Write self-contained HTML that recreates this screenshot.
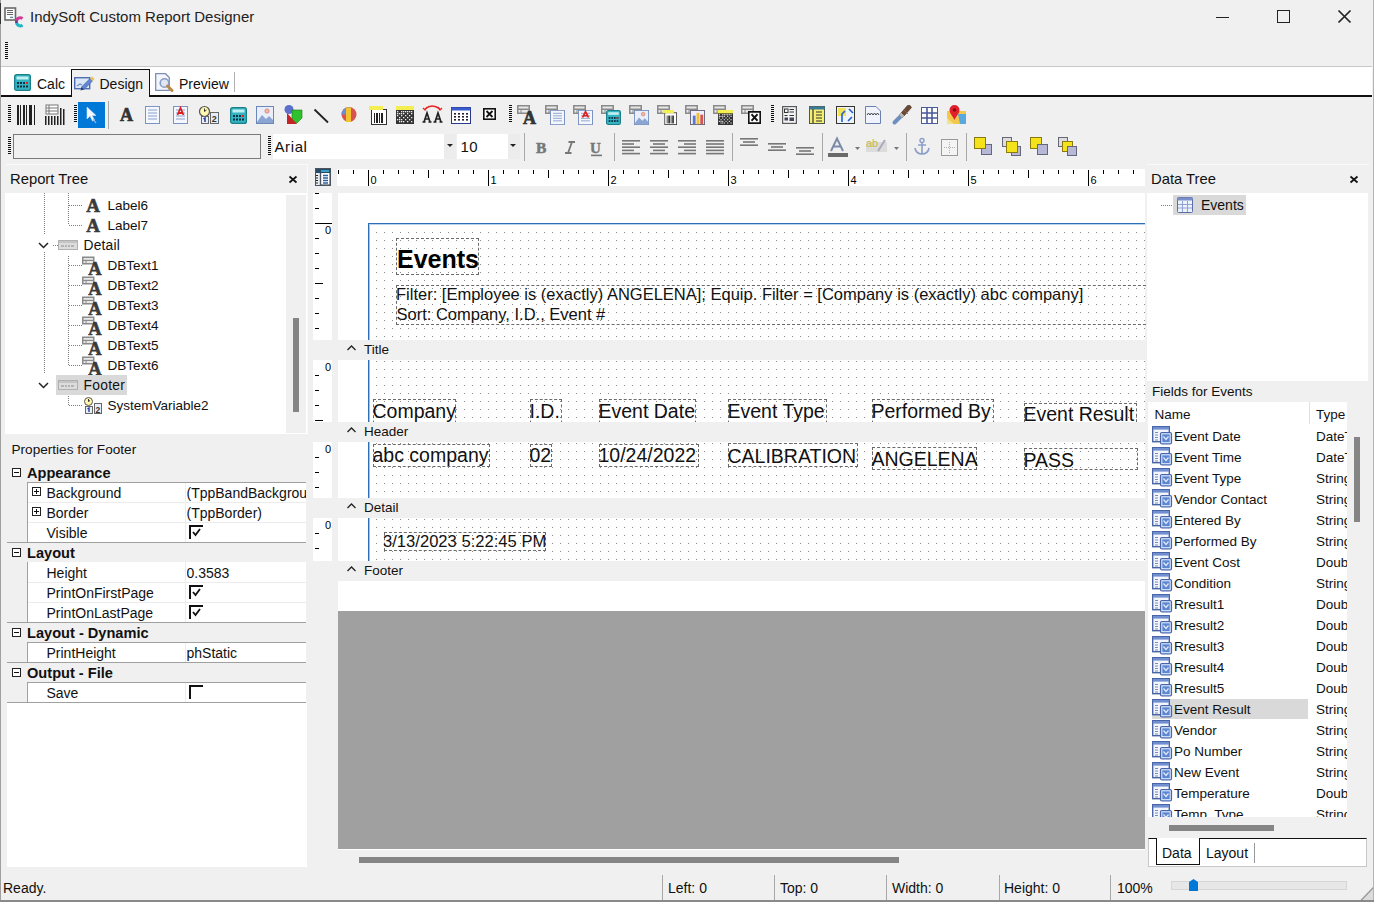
<!DOCTYPE html>
<html><head><meta charset="utf-8">
<style>
*{margin:0;padding:0;box-sizing:border-box}
html,body{width:1374px;height:902px;overflow:hidden;background:#f0f0f0;font-family:"Liberation Sans",sans-serif;color:#000;position:relative}
.a{position:absolute}
.t{position:absolute;white-space:nowrap;line-height:1}
svg{overflow:visible}
</style></head><body>
<div class="t" style="left:30px;top:9.10px;font-size:15px;font-weight:400;color:#222;">IndySoft Custom Report Designer</div>
<svg class="a" style="left:0px;top:0px" width="26" height="30" viewBox="0 0 26 30"><rect x="5" y="8" width="10.5" height="12" fill="#fbfbfb" stroke="#6a6a6a" stroke-width="1.6"/><path d="M7 10.5H13M7 12.5H13M7 14.5H13" stroke="#555" stroke-width="0.9"/><path d="M10 17.3H13" stroke="#2a6a8a" stroke-width="1"/><path d="M22.5 18.6 A3.6 3.6 0 0 0 16.6 21.8" stroke="#d23a96" stroke-width="3" fill="none"/><path d="M16.6 21.8 A3.6 3.6 0 0 0 22.5 25" stroke="#20b6c4" stroke-width="3" fill="none"/><path d="M16.4 20.5V23" stroke="#6a3a8a" stroke-width="2.4"/></svg>
<div class="a" style="left:1216px;top:16.5px;width:13px;height:1.6px;background:#222;"></div>
<div class="a" style="left:1277px;top:10px;width:13px;height:13px;border:1.2px solid #222"></div>
<svg class="a" style="left:1338px;top:10px" width="13" height="13" viewBox="0 0 13 13"><path d="M0.5 0.5L12.5 12.5M12.5 0.5L0.5 12.5" stroke="#222" stroke-width="1.7"/></svg>
<svg class="a" style="left:5px;top:42px" width="3" height="19" viewBox="0 0 3 19"><rect x="0" y="0" width="3" height="1" fill="#111"/><rect x="0" y="2" width="3" height="1" fill="#111"/><rect x="0" y="4" width="3" height="1" fill="#111"/><rect x="0" y="6" width="3" height="1" fill="#111"/><rect x="0" y="8" width="3" height="1" fill="#111"/><rect x="0" y="10" width="3" height="1" fill="#111"/><rect x="0" y="12" width="3" height="1" fill="#111"/><rect x="0" y="14" width="3" height="1" fill="#111"/><rect x="0" y="16" width="3" height="1" fill="#111"/></svg>
<div class="a" style="left:1px;top:66px;width:1371px;height:1px;background:#c8c8c8;"></div>
<div class="a" style="left:1px;top:67px;width:1371px;height:28px;background:#fff;"></div>
<div class="a" style="left:1px;top:95px;width:70px;height:2px;background:#111;"></div>
<div class="a" style="left:149px;top:95px;width:1223px;height:2px;background:#111;"></div>
<div class="a" style="left:71px;top:69px;width:79px;height:28px;background:#f0f0f0;border:1.5px solid #111;border-bottom:none"></div>
<div class="a" style="left:234px;top:72px;width:1px;height:20px;background:#b0b0b0;"></div>
<svg class="a" style="left:14px;top:74px" width="17" height="17" viewBox="0 0 17 17"><rect x="0.6" y="0.6" width="15.8" height="15.8" rx="2" fill="#34b4be" stroke="#1a7f8a" stroke-width="1.2"/><rect x="2.5" y="2.5" width="12" height="3" fill="#bfeff2"/><g fill="#08304a"><rect x="3" y="8.0" width="2" height="2"/><rect x="3" y="11.5" width="2" height="2"/><rect x="6" y="8.0" width="2" height="2"/><rect x="6" y="11.5" width="2" height="2"/><rect x="9" y="8.0" width="2" height="2"/><rect x="9" y="11.5" width="2" height="2"/><rect x="12" y="8.0" width="2" height="2"/><rect x="12" y="11.5" width="2" height="2"/></g><rect x="12" y="8" width="2" height="2" fill="#d22"/></svg>
<div class="t" style="left:37px;top:77.15px;font-size:14px;font-weight:400;color:#111;">Calc</div>
<svg class="a" style="left:74px;top:74px" width="21" height="17" viewBox="0 0 21 17"><rect x="0.7" y="3.7" width="15" height="11" fill="#dbe6f7" stroke="#4f6fb0" stroke-width="1.4"/><path d="M3 12 L6 10 L8 11" stroke="#6d8fd0" stroke-width="1.2" fill="none"/><path d="M7.5 13 L16 4.5 L18.5 7 L10 15.5 Z" fill="#5f86d4" stroke="#3e5ea8" stroke-width="0.6"/><path d="M16 4.5 L18 2.5 L20.5 5 L18.5 7 Z" fill="#e8c050"/><path d="M7.5 13 L6.5 16.5 L10 15.5Z" fill="#2a3a6a"/></svg>
<div class="t" style="left:99.5px;top:77.15px;font-size:14px;font-weight:400;color:#111;">Design</div>
<svg class="a" style="left:155px;top:73px" width="20" height="19" viewBox="0 0 20 19"><path d="M0.7 0.7H10.5L14.3 4.5V17.3H0.7Z" fill="#f4f6fb" stroke="#7d8fb8" stroke-width="1.3"/><circle cx="9.5" cy="10" r="4.3" fill="#dfe6f4" stroke="#8a9cc4" stroke-width="1.6"/><path d="M12.5 13L17 17.5" stroke="#b88a4a" stroke-width="3" stroke-linecap="round"/></svg>
<div class="t" style="left:179px;top:77.15px;font-size:14px;font-weight:400;color:#111;">Preview</div>
<svg class="a" style="left:8px;top:105px" width="3" height="19" viewBox="0 0 3 19"><rect x="0" y="0" width="3" height="1" fill="#111"/><rect x="0" y="2" width="3" height="1" fill="#111"/><rect x="0" y="4" width="3" height="1" fill="#111"/><rect x="0" y="6" width="3" height="1" fill="#111"/><rect x="0" y="8" width="3" height="1" fill="#111"/><rect x="0" y="10" width="3" height="1" fill="#111"/><rect x="0" y="12" width="3" height="1" fill="#111"/><rect x="0" y="14" width="3" height="1" fill="#111"/><rect x="0" y="16" width="3" height="1" fill="#111"/></svg>
<svg class="a" style="left:17px;top:105px" width="20" height="20" viewBox="0 0 20 20"><rect x="0" y="0" width="2" height="20" fill="#222"/><rect x="3" y="0" width="1" height="20" fill="#222"/><rect x="6" y="0" width="2" height="20" fill="#222"/><rect x="9" y="0" width="1" height="20" fill="#222"/><rect x="12" y="0" width="3" height="20" fill="#222"/><rect x="17" y="0" width="1" height="20" fill="#222"/></svg>
<svg class="a" style="left:45px;top:105px" width="20" height="20" viewBox="0 0 20 20"><rect x="1" y="0" width="12" height="9" fill="#fff" stroke="#777"/><path d="M1 3H13M1 6H13M4 0V9" stroke="#777"/><rect x="0" y="11" width="1.5" height="9" fill="#222"/><rect x="3" y="11" width="1.5" height="9" fill="#222"/><rect x="6" y="11" width="1.5" height="9" fill="#222"/><rect x="9" y="11" width="1.5" height="9" fill="#222"/><rect x="12" y="11" width="1.5" height="9" fill="#222"/><rect x="15" y="3" width="1.5" height="17" fill="#222"/><rect x="18" y="4" width="1.5" height="16" fill="#222"/></svg>
<svg class="a" style="left:74px;top:105px" width="3" height="19" viewBox="0 0 3 19"><rect x="0" y="0" width="3" height="1" fill="#111"/><rect x="0" y="2" width="3" height="1" fill="#111"/><rect x="0" y="4" width="3" height="1" fill="#111"/><rect x="0" y="6" width="3" height="1" fill="#111"/><rect x="0" y="8" width="3" height="1" fill="#111"/><rect x="0" y="10" width="3" height="1" fill="#111"/><rect x="0" y="12" width="3" height="1" fill="#111"/><rect x="0" y="14" width="3" height="1" fill="#111"/><rect x="0" y="16" width="3" height="1" fill="#111"/></svg>
<div class="a" style="left:78px;top:102px;width:27px;height:26px;background:#0078d7;"></div>
<svg class="a" style="left:86px;top:106px" width="12" height="18" viewBox="0 0 12 18"><path d="M1 1V13L4 10L6.5 15L8.5 14L6 9.5H10Z" fill="#f4f8ff" stroke="#cfe0f5" stroke-width="0.6"/><path d="M7 13L10 17" stroke="#9cc3ee" stroke-width="1.2"/></svg>
<div class="a" style="left:108px;top:101px;width:1px;height:28px;background:#a8a8a8;"></div>
<svg class="a" style="left:119px;top:107px" width="15" height="15" viewBox="0 0 15 15"><text x="7.5" y="14" text-anchor="middle" font-family="Liberation Serif" font-weight="700" font-size="18" fill="#333" stroke="#333" stroke-width="0.7">A</text></svg>
<svg class="a" style="left:145px;top:106px" width="15" height="18" viewBox="0 0 15 18"><rect x="0.5" y="0.5" width="14" height="17" fill="#f4f7fd" stroke="#7d93c1"/><path d="M3 4H12M3 7H12M3 10H12M3 13H12" stroke="#8aa0cc" stroke-width="1"/></svg>
<svg class="a" style="left:173px;top:106px" width="15" height="18" viewBox="0 0 15 18"><rect x="0.5" y="0.5" width="14" height="17" fill="#f4f7fd" stroke="#7d93c1"/><path d="M3 4H12M3 7H12M3 10H12M3 13H12" stroke="#8aa0cc" stroke-width="1"/><path d="M4.5 9L7.5 2L10.5 9M5.5 7H9.5" stroke="#e02020" stroke-width="1.8" fill="none"/></svg>
<svg class="a" style="left:199px;top:106px" width="20" height="18" viewBox="0 0 20 18"><circle cx="5.5" cy="5.5" r="5" fill="#fff6b0" stroke="#555" stroke-width="1.2"/><path d="M5.5 2.5V5.5L7.5 4" stroke="#333" fill="none"/><rect x="2.5" y="10.5" width="7" height="7" fill="#e8eef8" stroke="#666"/><rect x="11.5" y="6.5" width="8" height="11" fill="#e8eef8" stroke="#666"/><path d="M6 16V12L4.5 13" stroke="#2a3f9a" stroke-width="1.5" fill="none"/><text x="12.8" y="16" font-family="Liberation Sans" font-weight="700" font-size="9" fill="#333">2</text></svg>
<svg class="a" style="left:230px;top:107px" width="17" height="17" viewBox="0 0 17 17"><rect x="0.6" y="0.6" width="15.8" height="15.8" rx="2" fill="#34b4be" stroke="#1a7f8a" stroke-width="1.2"/><rect x="2.5" y="2.5" width="12" height="3" fill="#bfeff2"/><g fill="#08304a"><rect x="3" y="8.0" width="2" height="2"/><rect x="3" y="11.5" width="2" height="2"/><rect x="6" y="8.0" width="2" height="2"/><rect x="6" y="11.5" width="2" height="2"/><rect x="9" y="8.0" width="2" height="2"/><rect x="9" y="11.5" width="2" height="2"/><rect x="12" y="8.0" width="2" height="2"/><rect x="12" y="11.5" width="2" height="2"/></g><rect x="12" y="8" width="2" height="2" fill="#d22"/></svg>
<svg class="a" style="left:256px;top:106px" width="18" height="18" viewBox="0 0 18 18"><rect x="0.5" y="0.5" width="17" height="17" fill="#e9effa" stroke="#6d86ba"/><path d="M1 16L6 9L10 13L13 10L17 14V17H1Z" fill="#8ba5d2"/><circle cx="11" cy="5" r="2.2" fill="#f0b9a5" stroke="#d46b5a" stroke-width="0.6"/></svg>
<svg class="a" style="left:284px;top:105px" width="19" height="19" viewBox="0 0 19 19"><circle cx="5" cy="4.5" r="4.5" fill="#5b6fcf"/><path d="M8 5H18V13L13 18H8Z" fill="#2fc22f" stroke="#1a7a1a" stroke-width="0.6"/><path d="M3 8V19H13Z" fill="#c42424"/></svg>
<svg class="a" style="left:314px;top:109px" width="15" height="14" viewBox="0 0 15 14"><path d="M0.5 0.5L14 13.5" stroke="#222" stroke-width="1.8"/></svg>
<svg class="a" style="left:341px;top:107px" width="16" height="15" viewBox="0 0 16 15"><circle cx="8" cy="7.5" r="7.5" fill="#d9534f"/><path d="M8 7.5V0A7.5 7.5 0 0 0 0.5 7.5Z" fill="#6c8cd5"/><path d="M5 0.5H10V15H5Z" fill="#f2c230"/></svg>
<svg class="a" style="left:368px;top:106px" width="19" height="19" viewBox="0 0 19 19"><rect x="3.5" y="3.5" width="15" height="15" fill="#fff" stroke="#333"/><rect x="1" y="0" width="14" height="4" fill="#f4ef50"/><rect x="6" y="7" width="1" height="10" fill="#222"/><rect x="8" y="7" width="2" height="10" fill="#222"/><rect x="11" y="7" width="1" height="10" fill="#222"/><rect x="13" y="7" width="2" height="10" fill="#222"/></svg>
<svg class="a" style="left:396px;top:106px" width="18" height="18" viewBox="0 0 18 18"><rect x="0" y="3" width="18" height="15" fill="#333"/><rect x="0" y="0" width="18" height="4" fill="#f4ef50"/><rect x="1" y="5" width="1.3" height="1.3" fill="#eee"/><rect x="1" y="7" width="1.3" height="1.3" fill="#eee"/><rect x="1" y="9" width="1.3" height="1.3" fill="#eee"/><rect x="1" y="13" width="1.3" height="1.3" fill="#eee"/><rect x="3" y="7" width="1.3" height="1.3" fill="#eee"/><rect x="3" y="11" width="1.3" height="1.3" fill="#eee"/><rect x="3" y="13" width="1.3" height="1.3" fill="#eee"/><rect x="3" y="15" width="1.3" height="1.3" fill="#eee"/><rect x="5" y="5" width="1.3" height="1.3" fill="#eee"/><rect x="5" y="7" width="1.3" height="1.3" fill="#eee"/><rect x="5" y="9" width="1.3" height="1.3" fill="#eee"/><rect x="5" y="13" width="1.3" height="1.3" fill="#eee"/><rect x="5" y="15" width="1.3" height="1.3" fill="#eee"/><rect x="7" y="5" width="1.3" height="1.3" fill="#eee"/><rect x="7" y="7" width="1.3" height="1.3" fill="#eee"/><rect x="7" y="11" width="1.3" height="1.3" fill="#eee"/><rect x="7" y="15" width="1.3" height="1.3" fill="#eee"/><rect x="9" y="5" width="1.3" height="1.3" fill="#eee"/><rect x="9" y="9" width="1.3" height="1.3" fill="#eee"/><rect x="9" y="13" width="1.3" height="1.3" fill="#eee"/><rect x="11" y="5" width="1.3" height="1.3" fill="#eee"/><rect x="11" y="7" width="1.3" height="1.3" fill="#eee"/><rect x="11" y="11" width="1.3" height="1.3" fill="#eee"/><rect x="11" y="15" width="1.3" height="1.3" fill="#eee"/><rect x="13" y="5" width="1.3" height="1.3" fill="#eee"/><rect x="13" y="9" width="1.3" height="1.3" fill="#eee"/><rect x="13" y="13" width="1.3" height="1.3" fill="#eee"/><rect x="15" y="5" width="1.3" height="1.3" fill="#eee"/><rect x="15" y="7" width="1.3" height="1.3" fill="#eee"/><rect x="15" y="11" width="1.3" height="1.3" fill="#eee"/><rect x="15" y="15" width="1.3" height="1.3" fill="#eee"/></svg>
<svg class="a" style="left:422px;top:104px" width="21" height="19" viewBox="0 0 21 19"><path d="M3 5Q10 -1 18 5" stroke="#e22" stroke-width="1.6" fill="none"/><path d="M1 4L3 6L5 3M16 3L18 6L20 4" stroke="#e22" stroke-width="1.2" fill="none"/><path d="M0.5 18H3.5M6.5 18H9.5M2 18L5 9L8 18M3.5 15H6.5" stroke="#222" stroke-width="1.7" fill="none"/><path d="M11.5 18H14.5M17.5 18H20.5M13 18L16 9L19 18M14.5 15H17.5" stroke="#222" stroke-width="1.7" fill="none"/></svg>
<svg class="a" style="left:451px;top:107px" width="20" height="17" viewBox="0 0 20 17"><rect x="0.5" y="0.5" width="19" height="16" fill="#fff" stroke="#2a3a8a"/><rect x="0.5" y="0.5" width="19" height="3" fill="#3a5bd0"/><rect x="3" y="6" width="2" height="1.6" fill="#223"/><rect x="3" y="9" width="2" height="1.6" fill="#223"/><rect x="3" y="12" width="2" height="1.6" fill="#223"/><rect x="7" y="6" width="2" height="1.6" fill="#223"/><rect x="7" y="9" width="2" height="1.6" fill="#223"/><rect x="7" y="12" width="2" height="1.6" fill="#223"/><rect x="11" y="6" width="2" height="1.6" fill="#223"/><rect x="11" y="9" width="2" height="1.6" fill="#223"/><rect x="11" y="12" width="2" height="1.6" fill="#223"/><rect x="15" y="6" width="2" height="1.6" fill="#223"/><rect x="15" y="9" width="2" height="1.6" fill="#223"/><rect x="15" y="12" width="2" height="1.6" fill="#223"/></svg>
<svg class="a" style="left:483px;top:108px" width="13" height="12" viewBox="0 0 13 12"><rect x="0.8" y="0.8" width="11.4" height="10.4" fill="#fff" stroke="#111" stroke-width="1.6"/><path d="M3.5 3L9.5 9M9.5 3L3.5 9" stroke="#111" stroke-width="1.8"/></svg>
<svg class="a" style="left:509px;top:105px" width="3" height="19" viewBox="0 0 3 19"><rect x="0" y="0" width="3" height="1" fill="#111"/><rect x="0" y="2" width="3" height="1" fill="#111"/><rect x="0" y="4" width="3" height="1" fill="#111"/><rect x="0" y="6" width="3" height="1" fill="#111"/><rect x="0" y="8" width="3" height="1" fill="#111"/><rect x="0" y="10" width="3" height="1" fill="#111"/><rect x="0" y="12" width="3" height="1" fill="#111"/><rect x="0" y="14" width="3" height="1" fill="#111"/><rect x="0" y="16" width="3" height="1" fill="#111"/></svg>
<svg class="a" style="left:517px;top:105px" width="13" height="9" viewBox="0 0 13 9"><rect x="0" y="0" width="13" height="9" fill="#8a8a8a"/><rect x="1.5" y="1.5" width="10" height="2" fill="#e8e8e8"/><rect x="1.5" y="5" width="2" height="2.5" fill="#e8e8e8"/><rect x="4.5" y="5" width="7" height="2.5" fill="#e8e8e8"/></svg>
<svg class="a" style="left:522px;top:110px" width="15" height="15" viewBox="0 0 15 15" preserveAspectRatio="none"><text x="7.5" y="14" text-anchor="middle" font-family="Liberation Serif" font-weight="700" font-size="18" fill="#333" stroke="#333" stroke-width="0.7">A</text></svg>
<svg class="a" style="left:545px;top:105px" width="13" height="9" viewBox="0 0 13 9"><rect x="0" y="0" width="13" height="9" fill="#8a8a8a"/><rect x="1.5" y="1.5" width="10" height="2" fill="#e8e8e8"/><rect x="1.5" y="5" width="2" height="2.5" fill="#e8e8e8"/><rect x="4.5" y="5" width="7" height="2.5" fill="#e8e8e8"/></svg>
<svg class="a" style="left:550px;top:110px" width="15" height="15" viewBox="0 0 15 18" preserveAspectRatio="none"><rect x="0.5" y="0.5" width="14" height="17" fill="#f4f7fd" stroke="#7d93c1"/><path d="M3 4H12M3 7H12M3 10H12M3 13H12" stroke="#8aa0cc" stroke-width="1"/></svg>
<svg class="a" style="left:573px;top:105px" width="13" height="9" viewBox="0 0 13 9"><rect x="0" y="0" width="13" height="9" fill="#8a8a8a"/><rect x="1.5" y="1.5" width="10" height="2" fill="#e8e8e8"/><rect x="1.5" y="5" width="2" height="2.5" fill="#e8e8e8"/><rect x="4.5" y="5" width="7" height="2.5" fill="#e8e8e8"/></svg>
<svg class="a" style="left:578px;top:110px" width="15" height="15" viewBox="0 0 15 18" preserveAspectRatio="none"><rect x="0.5" y="0.5" width="14" height="17" fill="#f4f7fd" stroke="#7d93c1"/><path d="M3 4H12M3 7H12M3 10H12M3 13H12" stroke="#8aa0cc" stroke-width="1"/><path d="M4.5 9L7.5 2L10.5 9M5.5 7H9.5" stroke="#e02020" stroke-width="1.8" fill="none"/></svg>
<svg class="a" style="left:601px;top:105px" width="13" height="9" viewBox="0 0 13 9"><rect x="0" y="0" width="13" height="9" fill="#8a8a8a"/><rect x="1.5" y="1.5" width="10" height="2" fill="#e8e8e8"/><rect x="1.5" y="5" width="2" height="2.5" fill="#e8e8e8"/><rect x="4.5" y="5" width="7" height="2.5" fill="#e8e8e8"/></svg>
<svg class="a" style="left:606px;top:110px" width="15" height="15" viewBox="0 0 17 17" preserveAspectRatio="none"><rect x="0.6" y="0.6" width="15.8" height="15.8" rx="2" fill="#34b4be" stroke="#1a7f8a" stroke-width="1.2"/><rect x="2.5" y="2.5" width="12" height="3" fill="#bfeff2"/><g fill="#08304a"><rect x="3" y="8.0" width="2" height="2"/><rect x="3" y="11.5" width="2" height="2"/><rect x="6" y="8.0" width="2" height="2"/><rect x="6" y="11.5" width="2" height="2"/><rect x="9" y="8.0" width="2" height="2"/><rect x="9" y="11.5" width="2" height="2"/><rect x="12" y="8.0" width="2" height="2"/><rect x="12" y="11.5" width="2" height="2"/></g><rect x="12" y="8" width="2" height="2" fill="#d22"/></svg>
<svg class="a" style="left:629px;top:105px" width="13" height="9" viewBox="0 0 13 9"><rect x="0" y="0" width="13" height="9" fill="#8a8a8a"/><rect x="1.5" y="1.5" width="10" height="2" fill="#e8e8e8"/><rect x="1.5" y="5" width="2" height="2.5" fill="#e8e8e8"/><rect x="4.5" y="5" width="7" height="2.5" fill="#e8e8e8"/></svg>
<svg class="a" style="left:634px;top:110px" width="15" height="15" viewBox="0 0 18 18" preserveAspectRatio="none"><rect x="0.5" y="0.5" width="17" height="17" fill="#e9effa" stroke="#6d86ba"/><path d="M1 16L6 9L10 13L13 10L17 14V17H1Z" fill="#8ba5d2"/><circle cx="11" cy="5" r="2.2" fill="#f0b9a5" stroke="#d46b5a" stroke-width="0.6"/></svg>
<svg class="a" style="left:657px;top:105px" width="13" height="9" viewBox="0 0 13 9"><rect x="0" y="0" width="13" height="9" fill="#8a8a8a"/><rect x="1.5" y="1.5" width="10" height="2" fill="#e8e8e8"/><rect x="1.5" y="5" width="2" height="2.5" fill="#e8e8e8"/><rect x="4.5" y="5" width="7" height="2.5" fill="#e8e8e8"/></svg>
<svg class="a" style="left:662px;top:110px" width="15" height="15" viewBox="0 0 19 19" preserveAspectRatio="none"><rect x="3.5" y="3.5" width="15" height="15" fill="#fff" stroke="#333"/><rect x="1" y="0" width="14" height="4" fill="#f4ef50"/><rect x="6" y="7" width="1" height="10" fill="#222"/><rect x="8" y="7" width="2" height="10" fill="#222"/><rect x="11" y="7" width="1" height="10" fill="#222"/><rect x="13" y="7" width="2" height="10" fill="#222"/></svg>
<svg class="a" style="left:685px;top:105px" width="13" height="9" viewBox="0 0 13 9"><rect x="0" y="0" width="13" height="9" fill="#8a8a8a"/><rect x="1.5" y="1.5" width="10" height="2" fill="#e8e8e8"/><rect x="1.5" y="5" width="2" height="2.5" fill="#e8e8e8"/><rect x="4.5" y="5" width="7" height="2.5" fill="#e8e8e8"/></svg>
<svg class="a" style="left:690px;top:110px" width="15" height="15" viewBox="0 0 16 16" preserveAspectRatio="none"><rect x="0.5" y="0.5" width="15" height="15" fill="#eef" stroke="#667"/><rect x="3" y="6" width="3" height="9" fill="#5a7ad0"/><rect x="7" y="3" width="3" height="12" fill="#f2c230"/><rect x="11" y="5" width="3" height="10" fill="#d9534f"/></svg>
<svg class="a" style="left:713px;top:105px" width="13" height="9" viewBox="0 0 13 9"><rect x="0" y="0" width="13" height="9" fill="#8a8a8a"/><rect x="1.5" y="1.5" width="10" height="2" fill="#e8e8e8"/><rect x="1.5" y="5" width="2" height="2.5" fill="#e8e8e8"/><rect x="4.5" y="5" width="7" height="2.5" fill="#e8e8e8"/></svg>
<svg class="a" style="left:718px;top:110px" width="15" height="15" viewBox="0 0 18 18" preserveAspectRatio="none"><rect x="0" y="3" width="18" height="15" fill="#333"/><rect x="0" y="0" width="18" height="4" fill="#f4ef50"/><rect x="1" y="5" width="1.3" height="1.3" fill="#eee"/><rect x="1" y="7" width="1.3" height="1.3" fill="#eee"/><rect x="1" y="9" width="1.3" height="1.3" fill="#eee"/><rect x="1" y="13" width="1.3" height="1.3" fill="#eee"/><rect x="3" y="7" width="1.3" height="1.3" fill="#eee"/><rect x="3" y="11" width="1.3" height="1.3" fill="#eee"/><rect x="3" y="13" width="1.3" height="1.3" fill="#eee"/><rect x="3" y="15" width="1.3" height="1.3" fill="#eee"/><rect x="5" y="5" width="1.3" height="1.3" fill="#eee"/><rect x="5" y="7" width="1.3" height="1.3" fill="#eee"/><rect x="5" y="9" width="1.3" height="1.3" fill="#eee"/><rect x="5" y="13" width="1.3" height="1.3" fill="#eee"/><rect x="5" y="15" width="1.3" height="1.3" fill="#eee"/><rect x="7" y="5" width="1.3" height="1.3" fill="#eee"/><rect x="7" y="7" width="1.3" height="1.3" fill="#eee"/><rect x="7" y="11" width="1.3" height="1.3" fill="#eee"/><rect x="7" y="15" width="1.3" height="1.3" fill="#eee"/><rect x="9" y="5" width="1.3" height="1.3" fill="#eee"/><rect x="9" y="9" width="1.3" height="1.3" fill="#eee"/><rect x="9" y="13" width="1.3" height="1.3" fill="#eee"/><rect x="11" y="5" width="1.3" height="1.3" fill="#eee"/><rect x="11" y="7" width="1.3" height="1.3" fill="#eee"/><rect x="11" y="11" width="1.3" height="1.3" fill="#eee"/><rect x="11" y="15" width="1.3" height="1.3" fill="#eee"/><rect x="13" y="5" width="1.3" height="1.3" fill="#eee"/><rect x="13" y="9" width="1.3" height="1.3" fill="#eee"/><rect x="13" y="13" width="1.3" height="1.3" fill="#eee"/><rect x="15" y="5" width="1.3" height="1.3" fill="#eee"/><rect x="15" y="7" width="1.3" height="1.3" fill="#eee"/><rect x="15" y="11" width="1.3" height="1.3" fill="#eee"/><rect x="15" y="15" width="1.3" height="1.3" fill="#eee"/></svg>
<svg class="a" style="left:741px;top:105px" width="13" height="9" viewBox="0 0 13 9"><rect x="0" y="0" width="13" height="9" fill="#8a8a8a"/><rect x="1.5" y="1.5" width="10" height="2" fill="#e8e8e8"/><rect x="1.5" y="5" width="2" height="2.5" fill="#e8e8e8"/><rect x="4.5" y="5" width="7" height="2.5" fill="#e8e8e8"/></svg>
<svg class="a" style="left:748px;top:111px" width="13" height="13" viewBox="0 0 13 12" preserveAspectRatio="none"><rect x="0.8" y="0.8" width="11.4" height="10.4" fill="#fff" stroke="#111" stroke-width="1.6"/><path d="M3.5 3L9.5 9M9.5 3L3.5 9" stroke="#111" stroke-width="1.8"/></svg>
<svg class="a" style="left:771px;top:105px" width="3" height="19" viewBox="0 0 3 19"><rect x="0" y="0" width="3" height="1" fill="#111"/><rect x="0" y="2" width="3" height="1" fill="#111"/><rect x="0" y="4" width="3" height="1" fill="#111"/><rect x="0" y="6" width="3" height="1" fill="#111"/><rect x="0" y="8" width="3" height="1" fill="#111"/><rect x="0" y="10" width="3" height="1" fill="#111"/><rect x="0" y="12" width="3" height="1" fill="#111"/><rect x="0" y="14" width="3" height="1" fill="#111"/><rect x="0" y="16" width="3" height="1" fill="#111"/></svg>
<svg class="a" style="left:782px;top:106px" width="15" height="18" viewBox="0 0 15 18"><rect x="0.6" y="0.6" width="13.8" height="16.8" fill="#f2f4f8" stroke="#5a5a5a" stroke-width="1.2"/><rect x="2.5" y="3" width="3.5" height="3.5" fill="none" stroke="#333" stroke-width="1"/><path d="M7.5 3.5H12M7.5 6H12M2.5 9.5H5.5M7.5 9.5H12" stroke="#333" stroke-width="1.1"/><rect x="2.5" y="11.5" width="3.5" height="3" fill="#445"/><rect x="7.5" y="11.5" width="4.5" height="3.5" fill="#445"/></svg>
<svg class="a" style="left:809px;top:106px" width="16" height="18" viewBox="0 0 16 18"><rect x="0.5" y="0.5" width="15" height="17" fill="#f4ef70" stroke="#4a5a4a"/><rect x="0.5" y="0.5" width="15" height="3" fill="#3b7a9a"/><path d="M4 3V17M7 6H13M7 9H13M7 12H13M7 15H13" stroke="#333" stroke-width="1.2"/></svg>
<svg class="a" style="left:836px;top:106px" width="19" height="18" viewBox="0 0 19 18"><rect x="0.5" y="0.5" width="18" height="17" fill="#eef3fa" stroke="#333"/><rect x="2" y="2" width="8" height="8" fill="#f2e25a"/><path d="M6 16V8L9 5M13 3L17 7M12 15L16 11" stroke="#1d5fd0" stroke-width="1.6" fill="none"/></svg>
<svg class="a" style="left:865px;top:106px" width="16" height="18" viewBox="0 0 16 18"><path d="M0.5 0.5H11L15.5 5V17.5H0.5Z" fill="#f0f3fb" stroke="#6b7fb3"/><path d="M2 9L3.5 7L5 9L6.5 7L8 9L9.5 7L11 9L12.5 7L14 9" stroke="#333" stroke-width="0.9" fill="none"/></svg>
<svg class="a" style="left:892px;top:104px" width="20" height="21" viewBox="0 0 20 21"><path d="M2.5 18.5L8.5 12.5" stroke="#6f8fbf" stroke-width="4" stroke-linecap="round"/><path d="M7 11L10 14L12.5 11.5L9.5 8.5Z" fill="#b8b8b8" stroke="#777" stroke-width="0.5"/><path d="M9.5 8.5L15.5 1.5Q18.5 0.5 19.5 3.5L12.5 11.5Z" fill="#6a4a34" stroke="#4a3020" stroke-width="0.6"/><path d="M12 6L16 10" stroke="#8a6a50" stroke-width="0.8"/></svg>
<svg class="a" style="left:921px;top:107px" width="17" height="17" viewBox="0 0 17 17"><rect x="0.5" y="0.5" width="16" height="16" fill="#fff" stroke="#4a5a9a"/><path d="M6 0.5V16.5M11 0.5V16.5M0.5 6H16.5M0.5 11H16.5" stroke="#4a5a9a" stroke-width="1.6"/></svg>
<svg class="a" style="left:946px;top:104px" width="21" height="21" viewBox="0 0 21 21"><path d="M1 7H20V20H1Z" fill="#f2c94c"/><path d="M12 10H20V20H14Z" fill="#5aa8e0"/><path d="M1 14L8 20H1Z" fill="#f4e28a"/><path d="M8.5 16C6 11 3.5 9 3.5 6A5 5 0 0 1 13.5 6C13.5 9 11 11 8.5 16Z" fill="#e0202a"/><circle cx="8.5" cy="6" r="1.8" fill="#8a0d12"/></svg>
<svg class="a" style="left:8px;top:137px" width="3" height="19" viewBox="0 0 3 19"><rect x="0" y="0" width="3" height="1" fill="#111"/><rect x="0" y="2" width="3" height="1" fill="#111"/><rect x="0" y="4" width="3" height="1" fill="#111"/><rect x="0" y="6" width="3" height="1" fill="#111"/><rect x="0" y="8" width="3" height="1" fill="#111"/><rect x="0" y="10" width="3" height="1" fill="#111"/><rect x="0" y="12" width="3" height="1" fill="#111"/><rect x="0" y="14" width="3" height="1" fill="#111"/><rect x="0" y="16" width="3" height="1" fill="#111"/></svg>
<div class="a" style="left:13px;top:134px;width:248px;height:25px;background:#f0f0f0;border:1px solid #7a7a7a"></div>
<svg class="a" style="left:268px;top:136px" width="3" height="20" viewBox="0 0 3 20"><rect x="0" y="0" width="3" height="1" fill="#111"/><rect x="0" y="2" width="3" height="1" fill="#111"/><rect x="0" y="4" width="3" height="1" fill="#111"/><rect x="0" y="6" width="3" height="1" fill="#111"/><rect x="0" y="8" width="3" height="1" fill="#111"/><rect x="0" y="10" width="3" height="1" fill="#111"/><rect x="0" y="12" width="3" height="1" fill="#111"/><rect x="0" y="14" width="3" height="1" fill="#111"/><rect x="0" y="16" width="3" height="1" fill="#111"/><rect x="0" y="18" width="3" height="1" fill="#111"/></svg>
<div class="a" style="left:273px;top:134px;width:183px;height:25px;background:#fff;"></div>
<div class="a" style="left:444px;top:134px;width:12px;height:25px;background:#ececec;"></div>
<div class="t" style="left:274.5px;top:139.30px;font-size:15px;font-weight:400;color:#111;letter-spacing:0.6px">Arial</div>
<svg class="a" style="left:447px;top:144px" width="6" height="4" viewBox="0 0 6 4"><path d="M0 0H6L3 3Z" fill="#222"/></svg>
<div class="a" style="left:457px;top:134px;width:63px;height:25px;background:#fff;"></div>
<div class="a" style="left:508px;top:134px;width:12px;height:25px;background:#ececec;"></div>
<div class="t" style="left:460.5px;top:139.30px;font-size:15px;font-weight:400;color:#111;letter-spacing:0.3px">10</div>
<svg class="a" style="left:510px;top:144px" width="6" height="4" viewBox="0 0 6 4"><path d="M0 0H6L3 3Z" fill="#222"/></svg>
<div class="a" style="left:524px;top:133px;width:1px;height:28px;background:#a8a8a8;"></div>
<svg class="a" style="left:536px;top:141px" width="12" height="13" viewBox="0 0 12 13"><text x="0" y="12.2" font-family="Liberation Serif" font-weight="700" font-size="15.5" fill="#777" stroke="#777" stroke-width="0.5">B</text></svg>
<svg class="a" style="left:564px;top:141px" width="12" height="13" viewBox="0 0 12 13"><path d="M4.5 1H11M1 12H7.5M8 1L4 12" stroke="#777" stroke-width="1.8" fill="none"/></svg>
<svg class="a" style="left:590px;top:141px" width="13" height="16" viewBox="0 0 13 16"><text x="0" y="12" font-family="Liberation Serif" font-weight="700" font-size="15" fill="#777" stroke="#777" stroke-width="0.4">U</text><rect x="1" y="13.6" width="11" height="1.6" fill="#777"/></svg>
<div class="a" style="left:614px;top:133px;width:1px;height:28px;background:#a8a8a8;"></div>
<svg class="a" style="left:622px;top:140px" width="19" height="16" viewBox="0 0 19 16"><rect x="0" y="0.0" width="18" height="1.6" fill="#777"/><rect x="0" y="3.2" width="12" height="1.6" fill="#777"/><rect x="0" y="6.4" width="18" height="1.6" fill="#777"/><rect x="0" y="9.6" width="12" height="1.6" fill="#777"/><rect x="0" y="12.8" width="18" height="1.6" fill="#777"/></svg>
<svg class="a" style="left:650px;top:140px" width="19" height="16" viewBox="0 0 19 16"><rect x="0" y="0.0" width="18" height="1.6" fill="#777"/><rect x="3" y="3.2" width="12" height="1.6" fill="#777"/><rect x="0" y="6.4" width="18" height="1.6" fill="#777"/><rect x="3" y="9.6" width="12" height="1.6" fill="#777"/><rect x="0" y="12.8" width="18" height="1.6" fill="#777"/></svg>
<svg class="a" style="left:678px;top:140px" width="19" height="16" viewBox="0 0 19 16"><rect x="0" y="0.0" width="18" height="1.6" fill="#777"/><rect x="6" y="3.2" width="12" height="1.6" fill="#777"/><rect x="0" y="6.4" width="18" height="1.6" fill="#777"/><rect x="6" y="9.6" width="12" height="1.6" fill="#777"/><rect x="0" y="12.8" width="18" height="1.6" fill="#777"/></svg>
<svg class="a" style="left:706px;top:140px" width="19" height="16" viewBox="0 0 19 16"><rect x="0" y="0.0" width="18" height="1.6" fill="#777"/><rect x="0" y="3.2" width="18" height="1.6" fill="#777"/><rect x="0" y="6.4" width="18" height="1.6" fill="#777"/><rect x="0" y="9.6" width="18" height="1.6" fill="#777"/><rect x="0" y="12.8" width="18" height="1.6" fill="#777"/></svg>
<div class="a" style="left:732px;top:133px;width:1px;height:28px;background:#a8a8a8;"></div>
<svg class="a" style="left:740px;top:138px" width="19" height="16" viewBox="0 0 19 16"><rect x="0" y="0.0" width="18" height="1.6" fill="#777"/><rect x="3" y="3.2" width="12" height="1.6" fill="#777"/><rect x="0" y="6.4" width="18" height="1.6" fill="#777"/></svg>
<svg class="a" style="left:768px;top:143px" width="19" height="16" viewBox="0 0 19 16"><rect x="0" y="0.0" width="18" height="1.6" fill="#777"/><rect x="3" y="3.2" width="12" height="1.6" fill="#777"/><rect x="0" y="6.4" width="18" height="1.6" fill="#777"/></svg>
<svg class="a" style="left:796px;top:147px" width="19" height="16" viewBox="0 0 19 16"><rect x="0" y="0.0" width="18" height="1.6" fill="#777"/><rect x="3" y="3.2" width="12" height="1.6" fill="#777"/><rect x="0" y="6.4" width="18" height="1.6" fill="#777"/></svg>
<div class="a" style="left:822px;top:133px;width:1px;height:28px;background:#a8a8a8;"></div>
<svg class="a" style="left:828px;top:137px" width="21" height="21" viewBox="0 0 21 21"><path d="M3 14L9 1.5L15 14M5.5 9.5H12.5" stroke="#7c8aa8" stroke-width="2" fill="none"/><rect x="0" y="16" width="20" height="4" fill="#6a6a6a"/></svg>
<svg class="a" style="left:855px;top:147px" width="5" height="3" viewBox="0 0 5 3"><path d="M0 0H5L2.5 3Z" fill="#777"/></svg>
<svg class="a" style="left:866px;top:137px" width="21" height="16" viewBox="0 0 21 16"><rect x="0" y="5" width="21" height="10" fill="#dcdcdc"/><text x="0" y="10" font-family="Liberation Sans" font-size="11" fill="#c8b84a">ab</text><path d="M12 14L19 3" stroke="#aab" stroke-width="2"/></svg>
<svg class="a" style="left:894px;top:147px" width="5" height="3" viewBox="0 0 5 3"><path d="M0 0H5L2.5 3Z" fill="#777"/></svg>
<div class="a" style="left:906px;top:133px;width:1px;height:28px;background:#a8a8a8;"></div>
<svg class="a" style="left:913px;top:138px" width="18" height="18" viewBox="0 0 18 18"><circle cx="9" cy="2.5" r="2" fill="none" stroke="#8a9ec8" stroke-width="1.4"/><path d="M9 4.5V16M5 7H13M2 10Q3 16 9 16Q15 16 16 10" stroke="#8a9ec8" stroke-width="1.6" fill="none"/></svg>
<svg class="a" style="left:941px;top:139px" width="17" height="17" viewBox="0 0 17 17"><rect x="0.5" y="0.5" width="16" height="16" fill="#f4f4f4" stroke="#9a9a9a"/><path d="M8.5 3V14M3 8.5H14" stroke="#b0b0b0" stroke-dasharray="1 1"/></svg>
<div class="a" style="left:966px;top:133px;width:1px;height:28px;background:#a8a8a8;"></div>
<svg class="a" style="left:974px;top:137px" width="19" height="19" viewBox="0 0 19 19"><rect x="7.5" y="7.5" width="10" height="10" fill="#b7b7d8" stroke="#667"/><rect x="0.5" y="0.5" width="11" height="11" fill="#f4e21a" stroke="#8a7a10"/></svg>
<svg class="a" style="left:1002px;top:137px" width="19" height="19" viewBox="0 0 19 19"><rect x="0.5" y="0.5" width="9" height="9" fill="#ddd" stroke="#667"/><rect x="9.5" y="9.5" width="9" height="9" fill="#b7b7d8" stroke="#667"/><rect x="4.5" y="4.5" width="11" height="11" fill="#f4e21a" stroke="#8a7a10"/></svg>
<svg class="a" style="left:1030px;top:137px" width="19" height="19" viewBox="0 0 19 19"><rect x="0.5" y="0.5" width="11" height="11" fill="#f4e21a" stroke="#8a7a10"/><rect x="7.5" y="7.5" width="10" height="10" fill="#b7b7d8" stroke="#667"/></svg>
<svg class="a" style="left:1058px;top:137px" width="19" height="19" viewBox="0 0 19 19"><rect x="0.5" y="0.5" width="9" height="9" fill="#ddd" stroke="#667"/><rect x="4.5" y="4.5" width="10" height="10" fill="#f4e21a" stroke="#8a7a10"/><rect x="9.5" y="9.5" width="9" height="9" fill="#b7b7d8" stroke="#667"/></svg>
<div class="a" style="left:6px;top:165px;width:300px;height:28px;background:#f0f0f0;"></div>
<div class="a" style="left:6px;top:164px;width:301px;height:1px;background:#fafafa;"></div>
<div class="a" style="left:307px;top:164px;width:1px;height:270px;background:#fafafa;"></div>
<div class="t" style="left:10px;top:171.97px;font-size:14.8px;font-weight:400;color:#111;">Report Tree</div>
<svg class="a" style="left:289px;top:176px" width="8" height="7" viewBox="0 0 8 7"><path d="M0.5 0.5L7.5 6.5M7.5 0.5L0.5 6.5" stroke="#111" stroke-width="1.7"/></svg>
<div class="a" style="left:5px;top:193px;width:302px;height:241px;background:#fff;"></div>
<div class="a" style="left:286px;top:195px;width:20px;height:238px;background:#f0f0f0;"></div>
<div class="a" style="left:293px;top:318px;width:6px;height:94px;background:#858585;"></div>
<div class="a" style="left:44px;top:193px;width:1px;height:41px;background:transparent;background-image:linear-gradient(#808080 50%,transparent 50%);background-size:1px 2px"></div>
<div class="a" style="left:44px;top:252px;width:1px;height:122px;background:transparent;background-image:linear-gradient(#808080 50%,transparent 50%);background-size:1px 2px"></div>
<div class="a" style="left:68px;top:193px;width:1px;height:32px;background:transparent;background-image:linear-gradient(#808080 50%,transparent 50%);background-size:1px 2px"></div>
<div class="a" style="left:68px;top:256px;width:1px;height:109px;background:transparent;background-image:linear-gradient(#808080 50%,transparent 50%);background-size:1px 2px"></div>
<div class="a" style="left:68px;top:396px;width:1px;height:9px;background:transparent;background-image:linear-gradient(#808080 50%,transparent 50%);background-size:1px 2px"></div>
<div class="a" style="left:69px;top:205px;width:13px;height:1px;background:transparent;background-image:linear-gradient(90deg,#808080 50%,transparent 50%);background-size:2px 1px"></div>
<svg class="a" style="left:86px;top:198px" width="14" height="14" viewBox="0 0 14 14"><text x="7" y="13.8" text-anchor="middle" font-family="Liberation Serif" font-weight="700" font-size="19" fill="#3a3a3a" stroke="#3a3a3a" stroke-width="0.6">A</text></svg>
<div class="t" style="left:107.5px;top:198.57px;font-size:13.5px;font-weight:400;color:#111;">Label6</div>
<div class="a" style="left:69px;top:225px;width:13px;height:1px;background:transparent;background-image:linear-gradient(90deg,#808080 50%,transparent 50%);background-size:2px 1px"></div>
<svg class="a" style="left:86px;top:218px" width="14" height="14" viewBox="0 0 14 14"><text x="7" y="13.8" text-anchor="middle" font-family="Liberation Serif" font-weight="700" font-size="19" fill="#3a3a3a" stroke="#3a3a3a" stroke-width="0.6">A</text></svg>
<div class="t" style="left:107.5px;top:218.57px;font-size:13.5px;font-weight:400;color:#111;">Label7</div>
<svg class="a" style="left:38px;top:242px" width="11" height="7" viewBox="0 0 11 7"><path d="M1 1L5.5 5.5L10 1" stroke="#222" stroke-width="1.5" fill="none"/></svg>
<div class="a" style="left:53px;top:245px;width:5px;height:1px;background:transparent;background-image:linear-gradient(90deg,#808080 50%,transparent 50%);background-size:2px 1px"></div>
<svg class="a" style="left:58px;top:240px" width="20" height="10" viewBox="0 0 20 10"><rect x="0.5" y="0.5" width="19" height="9" fill="#dcdcdc" stroke="#b0b0b0"/><rect x="1" y="1" width="18" height="2" fill="#c4c4c4"/><path d="M3 6H6M7 6H9M10 6H12M13 6H16" stroke="#8a8a8a" stroke-width="1.2"/></svg>
<div class="t" style="left:83.5px;top:239.12px;font-size:13.8px;font-weight:400;color:#111;letter-spacing:0.2px">Detail</div>
<div class="a" style="left:69px;top:265px;width:13px;height:1px;background:transparent;background-image:linear-gradient(90deg,#808080 50%,transparent 50%);background-size:2px 1px"></div>
<svg class="a" style="left:82px;top:256px" width="21" height="19" viewBox="0 0 21 19"><rect x="0" y="0.5" width="12.5" height="8" fill="#8a8a8a"/><rect x="1.5" y="2" width="9.5" height="1.8" fill="#e8e8e8"/><rect x="1.5" y="5" width="2" height="2" fill="#e8e8e8"/><rect x="4.5" y="5" width="6.5" height="2" fill="#e8e8e8"/><text x="13" y="18.6" text-anchor="middle" font-family="Liberation Serif" font-weight="700" font-size="18.5" fill="#3a3a3a" stroke="#3a3a3a" stroke-width="0.6">A</text></svg>
<div class="t" style="left:107.5px;top:258.57px;font-size:13.5px;font-weight:400;color:#111;">DBText1</div>
<div class="a" style="left:69px;top:285px;width:13px;height:1px;background:transparent;background-image:linear-gradient(90deg,#808080 50%,transparent 50%);background-size:2px 1px"></div>
<svg class="a" style="left:82px;top:276px" width="21" height="19" viewBox="0 0 21 19"><rect x="0" y="0.5" width="12.5" height="8" fill="#8a8a8a"/><rect x="1.5" y="2" width="9.5" height="1.8" fill="#e8e8e8"/><rect x="1.5" y="5" width="2" height="2" fill="#e8e8e8"/><rect x="4.5" y="5" width="6.5" height="2" fill="#e8e8e8"/><text x="13" y="18.6" text-anchor="middle" font-family="Liberation Serif" font-weight="700" font-size="18.5" fill="#3a3a3a" stroke="#3a3a3a" stroke-width="0.6">A</text></svg>
<div class="t" style="left:107.5px;top:278.57px;font-size:13.5px;font-weight:400;color:#111;">DBText2</div>
<div class="a" style="left:69px;top:305px;width:13px;height:1px;background:transparent;background-image:linear-gradient(90deg,#808080 50%,transparent 50%);background-size:2px 1px"></div>
<svg class="a" style="left:82px;top:296px" width="21" height="19" viewBox="0 0 21 19"><rect x="0" y="0.5" width="12.5" height="8" fill="#8a8a8a"/><rect x="1.5" y="2" width="9.5" height="1.8" fill="#e8e8e8"/><rect x="1.5" y="5" width="2" height="2" fill="#e8e8e8"/><rect x="4.5" y="5" width="6.5" height="2" fill="#e8e8e8"/><text x="13" y="18.6" text-anchor="middle" font-family="Liberation Serif" font-weight="700" font-size="18.5" fill="#3a3a3a" stroke="#3a3a3a" stroke-width="0.6">A</text></svg>
<div class="t" style="left:107.5px;top:298.57px;font-size:13.5px;font-weight:400;color:#111;">DBText3</div>
<div class="a" style="left:69px;top:325px;width:13px;height:1px;background:transparent;background-image:linear-gradient(90deg,#808080 50%,transparent 50%);background-size:2px 1px"></div>
<svg class="a" style="left:82px;top:316px" width="21" height="19" viewBox="0 0 21 19"><rect x="0" y="0.5" width="12.5" height="8" fill="#8a8a8a"/><rect x="1.5" y="2" width="9.5" height="1.8" fill="#e8e8e8"/><rect x="1.5" y="5" width="2" height="2" fill="#e8e8e8"/><rect x="4.5" y="5" width="6.5" height="2" fill="#e8e8e8"/><text x="13" y="18.6" text-anchor="middle" font-family="Liberation Serif" font-weight="700" font-size="18.5" fill="#3a3a3a" stroke="#3a3a3a" stroke-width="0.6">A</text></svg>
<div class="t" style="left:107.5px;top:318.57px;font-size:13.5px;font-weight:400;color:#111;">DBText4</div>
<div class="a" style="left:69px;top:345px;width:13px;height:1px;background:transparent;background-image:linear-gradient(90deg,#808080 50%,transparent 50%);background-size:2px 1px"></div>
<svg class="a" style="left:82px;top:336px" width="21" height="19" viewBox="0 0 21 19"><rect x="0" y="0.5" width="12.5" height="8" fill="#8a8a8a"/><rect x="1.5" y="2" width="9.5" height="1.8" fill="#e8e8e8"/><rect x="1.5" y="5" width="2" height="2" fill="#e8e8e8"/><rect x="4.5" y="5" width="6.5" height="2" fill="#e8e8e8"/><text x="13" y="18.6" text-anchor="middle" font-family="Liberation Serif" font-weight="700" font-size="18.5" fill="#3a3a3a" stroke="#3a3a3a" stroke-width="0.6">A</text></svg>
<div class="t" style="left:107.5px;top:338.57px;font-size:13.5px;font-weight:400;color:#111;">DBText5</div>
<div class="a" style="left:69px;top:365px;width:13px;height:1px;background:transparent;background-image:linear-gradient(90deg,#808080 50%,transparent 50%);background-size:2px 1px"></div>
<svg class="a" style="left:82px;top:356px" width="21" height="19" viewBox="0 0 21 19"><rect x="0" y="0.5" width="12.5" height="8" fill="#8a8a8a"/><rect x="1.5" y="2" width="9.5" height="1.8" fill="#e8e8e8"/><rect x="1.5" y="5" width="2" height="2" fill="#e8e8e8"/><rect x="4.5" y="5" width="6.5" height="2" fill="#e8e8e8"/><text x="13" y="18.6" text-anchor="middle" font-family="Liberation Serif" font-weight="700" font-size="18.5" fill="#3a3a3a" stroke="#3a3a3a" stroke-width="0.6">A</text></svg>
<div class="t" style="left:107.5px;top:358.57px;font-size:13.5px;font-weight:400;color:#111;">DBText6</div>
<div class="a" style="left:56px;top:375px;width:71px;height:20px;background:#d9d9d9;"></div>
<svg class="a" style="left:38px;top:382px" width="11" height="7" viewBox="0 0 11 7"><path d="M1 1L5.5 5.5L10 1" stroke="#222" stroke-width="1.5" fill="none"/></svg>
<svg class="a" style="left:58px;top:380px" width="20" height="10" viewBox="0 0 20 10"><rect x="0.5" y="0.5" width="19" height="9" fill="#dcdcdc" stroke="#b0b0b0"/><rect x="1" y="1" width="18" height="2" fill="#c4c4c4"/><path d="M3 6H6M7 6H9M10 6H12M13 6H16" stroke="#8a8a8a" stroke-width="1.2"/></svg>
<div class="t" style="left:83.5px;top:379.12px;font-size:13.8px;font-weight:400;color:#111;letter-spacing:0.3px">Footer</div>
<div class="a" style="left:69px;top:405px;width:13px;height:1px;background:transparent;background-image:linear-gradient(90deg,#808080 50%,transparent 50%);background-size:2px 1px"></div>
<svg class="a" style="left:84px;top:397px" width="18" height="17" viewBox="0 0 18 17"><circle cx="4.5" cy="4.5" r="4" fill="#fff6b0" stroke="#555"/><path d="M4.5 2V4.5L6 3.5" stroke="#333" fill="none"/><rect x="1.5" y="9.5" width="7" height="7" fill="#e8eef8" stroke="#666"/><rect x="10.5" y="6.5" width="7" height="10" fill="#e8eef8" stroke="#666"/><path d="M5 15V11L3.5 12" stroke="#2a3f9a" stroke-width="1.4" fill="none"/><text x="11.5" y="15.5" font-family="Liberation Sans" font-weight="700" font-size="8.5" fill="#333">2</text></svg>
<div class="t" style="left:107.5px;top:398.57px;font-size:13.5px;font-weight:400;color:#111;">SystemVariable2</div>
<div class="a" style="left:7px;top:437px;width:300px;height:25px;background:#f0f0f0;"></div>
<div class="t" style="left:11.5px;top:443.49px;font-size:13.6px;font-weight:400;color:#111;">Properties for Footer</div>
<div class="a" style="left:7px;top:462px;width:299px;height:20px;background:#f0f0f0;"></div>
<svg class="a" style="left:12px;top:468px" width="9" height="9" viewBox="0 0 9 9"></svg>
<svg class="a" style="left:12px;top:468px" width="9" height="9"><rect x="0.5" y="0.5" width="8" height="8" fill="#fff" stroke="#222"/><path d="M2 4.5H7" stroke="#111"/></svg>
<div class="t" style="left:27px;top:465.94px;font-size:14.6px;font-weight:700;color:#111;">Appearance</div>
<div class="a" style="left:27px;top:482px;width:279px;height:1px;background:#a0a0a0;"></div>
<div class="a" style="left:7px;top:482px;width:20px;height:20px;background:#f0f0f0;"></div>
<div class="a" style="left:27px;top:482px;width:279px;height:20px;background:#fff;"></div>
<div class="a" style="left:27px;top:482px;width:1px;height:20px;background:#a0a0a0;"></div>
<div class="a" style="left:185px;top:482px;width:1px;height:20px;background:#ececec;"></div>
<svg class="a" style="left:32px;top:487px" width="9" height="9"><rect x="0.5" y="0.5" width="8" height="8" fill="#fff" stroke="#222"/><path d="M2 4.5H7M4.5 2V7" stroke="#111"/></svg>
<div class="t" style="left:46.5px;top:485.65px;font-size:14px;font-weight:400;color:#111;">Background</div>
<div class="t" style="left:186.5px;top:485.65px;font-size:14px;font-weight:400;color:#111;width:119px;overflow:hidden;padding-bottom:4px">(TppBandBackgrou</div>
<div class="a" style="left:7px;top:502px;width:20px;height:20px;background:#f0f0f0;"></div>
<div class="a" style="left:27px;top:502px;width:279px;height:20px;background:#fff;"></div>
<div class="a" style="left:27px;top:502px;width:1px;height:20px;background:#a0a0a0;"></div>
<div class="a" style="left:185px;top:502px;width:1px;height:20px;background:#ececec;"></div>
<svg class="a" style="left:32px;top:507px" width="9" height="9"><rect x="0.5" y="0.5" width="8" height="8" fill="#fff" stroke="#222"/><path d="M2 4.5H7M4.5 2V7" stroke="#111"/></svg>
<div class="t" style="left:46.5px;top:505.65px;font-size:14px;font-weight:400;color:#111;">Border</div>
<div class="t" style="left:186.5px;top:505.65px;font-size:14px;font-weight:400;color:#111;width:119px;overflow:hidden;padding-bottom:4px">(TppBorder)</div>
<div class="a" style="left:7px;top:522px;width:20px;height:20px;background:#f0f0f0;"></div>
<div class="a" style="left:27px;top:522px;width:279px;height:20px;background:#fff;"></div>
<div class="a" style="left:27px;top:522px;width:1px;height:20px;background:#a0a0a0;"></div>
<div class="a" style="left:185px;top:522px;width:1px;height:20px;background:#ececec;"></div>
<div class="t" style="left:46.5px;top:525.65px;font-size:14px;font-weight:400;color:#111;">Visible</div>
<svg class="a" style="left:189px;top:525px" width="14" height="15" viewBox="0 0 14 15"><path d="M1 14V1H14" stroke="#111" stroke-width="2" fill="none"/><path d="M4 7L6.5 10L11 4" stroke="#111" stroke-width="1.8" fill="none"/></svg>
<div class="a" style="left:7px;top:542px;width:299px;height:20px;background:#f0f0f0;"></div>
<svg class="a" style="left:12px;top:468px" width="9" height="9" viewBox="0 0 9 9"></svg>
<svg class="a" style="left:12px;top:548px" width="9" height="9"><rect x="0.5" y="0.5" width="8" height="8" fill="#fff" stroke="#222"/><path d="M2 4.5H7" stroke="#111"/></svg>
<div class="t" style="left:27px;top:545.94px;font-size:14.6px;font-weight:700;color:#111;">Layout</div>
<div class="a" style="left:27px;top:562px;width:279px;height:1px;background:#a0a0a0;"></div>
<div class="a" style="left:7px;top:562px;width:20px;height:20px;background:#f0f0f0;"></div>
<div class="a" style="left:27px;top:562px;width:279px;height:20px;background:#fff;"></div>
<div class="a" style="left:27px;top:562px;width:1px;height:20px;background:#a0a0a0;"></div>
<div class="a" style="left:185px;top:562px;width:1px;height:20px;background:#ececec;"></div>
<div class="t" style="left:46.5px;top:565.65px;font-size:14px;font-weight:400;color:#111;">Height</div>
<div class="t" style="left:186.5px;top:565.65px;font-size:14px;font-weight:400;color:#111;width:119px;overflow:hidden;padding-bottom:4px">0.3583</div>
<div class="a" style="left:7px;top:582px;width:20px;height:20px;background:#f0f0f0;"></div>
<div class="a" style="left:27px;top:582px;width:279px;height:20px;background:#fff;"></div>
<div class="a" style="left:27px;top:582px;width:1px;height:20px;background:#a0a0a0;"></div>
<div class="a" style="left:185px;top:582px;width:1px;height:20px;background:#ececec;"></div>
<div class="t" style="left:46.5px;top:585.65px;font-size:14px;font-weight:400;color:#111;">PrintOnFirstPage</div>
<svg class="a" style="left:189px;top:585px" width="14" height="15" viewBox="0 0 14 15"><path d="M1 14V1H14" stroke="#111" stroke-width="2" fill="none"/><path d="M4 7L6.5 10L11 4" stroke="#111" stroke-width="1.8" fill="none"/></svg>
<div class="a" style="left:7px;top:602px;width:20px;height:20px;background:#f0f0f0;"></div>
<div class="a" style="left:27px;top:602px;width:279px;height:20px;background:#fff;"></div>
<div class="a" style="left:27px;top:602px;width:1px;height:20px;background:#a0a0a0;"></div>
<div class="a" style="left:185px;top:602px;width:1px;height:20px;background:#ececec;"></div>
<div class="t" style="left:46.5px;top:605.65px;font-size:14px;font-weight:400;color:#111;">PrintOnLastPage</div>
<svg class="a" style="left:189px;top:605px" width="14" height="15" viewBox="0 0 14 15"><path d="M1 14V1H14" stroke="#111" stroke-width="2" fill="none"/><path d="M4 7L6.5 10L11 4" stroke="#111" stroke-width="1.8" fill="none"/></svg>
<div class="a" style="left:7px;top:622px;width:299px;height:20px;background:#f0f0f0;"></div>
<svg class="a" style="left:12px;top:468px" width="9" height="9" viewBox="0 0 9 9"></svg>
<svg class="a" style="left:12px;top:628px" width="9" height="9"><rect x="0.5" y="0.5" width="8" height="8" fill="#fff" stroke="#222"/><path d="M2 4.5H7" stroke="#111"/></svg>
<div class="t" style="left:27px;top:625.94px;font-size:14.6px;font-weight:700;color:#111;">Layout - Dynamic</div>
<div class="a" style="left:27px;top:642px;width:279px;height:1px;background:#a0a0a0;"></div>
<div class="a" style="left:7px;top:642px;width:20px;height:20px;background:#f0f0f0;"></div>
<div class="a" style="left:27px;top:642px;width:279px;height:20px;background:#fff;"></div>
<div class="a" style="left:27px;top:642px;width:1px;height:20px;background:#a0a0a0;"></div>
<div class="a" style="left:185px;top:642px;width:1px;height:20px;background:#ececec;"></div>
<div class="t" style="left:46.5px;top:645.65px;font-size:14px;font-weight:400;color:#111;">PrintHeight</div>
<div class="t" style="left:186.5px;top:645.65px;font-size:14px;font-weight:400;color:#111;width:119px;overflow:hidden;padding-bottom:4px">phStatic</div>
<div class="a" style="left:7px;top:662px;width:299px;height:20px;background:#f0f0f0;"></div>
<svg class="a" style="left:12px;top:468px" width="9" height="9" viewBox="0 0 9 9"></svg>
<svg class="a" style="left:12px;top:668px" width="9" height="9"><rect x="0.5" y="0.5" width="8" height="8" fill="#fff" stroke="#222"/><path d="M2 4.5H7" stroke="#111"/></svg>
<div class="t" style="left:27px;top:665.94px;font-size:14.6px;font-weight:700;color:#111;">Output - File</div>
<div class="a" style="left:27px;top:682px;width:279px;height:1px;background:#a0a0a0;"></div>
<div class="a" style="left:7px;top:682px;width:20px;height:20px;background:#f0f0f0;"></div>
<div class="a" style="left:27px;top:682px;width:279px;height:20px;background:#fff;"></div>
<div class="a" style="left:27px;top:682px;width:1px;height:20px;background:#a0a0a0;"></div>
<div class="a" style="left:185px;top:682px;width:1px;height:20px;background:#ececec;"></div>
<div class="t" style="left:46.5px;top:685.65px;font-size:14px;font-weight:400;color:#111;">Save</div>
<svg class="a" style="left:189px;top:685px" width="14" height="15" viewBox="0 0 14 15"><path d="M1 14V1H14" stroke="#111" stroke-width="2" fill="none"/></svg>
<div class="a" style="left:28px;top:502px;width:278px;height:1px;background:#ececec;"></div>
<div class="a" style="left:28px;top:522px;width:278px;height:1px;background:#ececec;"></div>
<div class="a" style="left:28px;top:582px;width:278px;height:1px;background:#ececec;"></div>
<div class="a" style="left:28px;top:602px;width:278px;height:1px;background:#ececec;"></div>
<div class="a" style="left:27px;top:482px;width:279px;height:1px;background:#a0a0a0;"></div>
<div class="a" style="left:7px;top:542px;width:299px;height:1px;background:#a0a0a0;"></div>
<div class="a" style="left:7px;top:622px;width:299px;height:1px;background:#a0a0a0;"></div>
<div class="a" style="left:27px;top:642px;width:279px;height:1px;background:#a0a0a0;"></div>
<div class="a" style="left:7px;top:662px;width:299px;height:1px;background:#a0a0a0;"></div>
<div class="a" style="left:27px;top:682px;width:279px;height:1px;background:#a0a0a0;"></div>
<div class="a" style="left:7px;top:702px;width:299px;height:1px;background:#a0a0a0;"></div>
<div class="a" style="left:7px;top:703px;width:300px;height:164px;background:#fff;"></div>
<svg class="a" style="left:315px;top:168px" width="16" height="18" viewBox="0 0 16 18"><rect x="0.8" y="0.8" width="14.4" height="16.4" fill="#fff" stroke="#4a5560" stroke-width="1.6"/><rect x="1" y="1" width="14" height="4" fill="#2a4a6a"/><rect x="6" y="2" width="8" height="2" fill="#3aa0c0"/><rect x="1" y="5" width="4" height="12" fill="#e8eef4"/><path d="M5.5 5V17" stroke="#4a5560" stroke-width="1.4"/><path d="M1 7.5H3M1 10H3M1 12.5H3M1 15H3" stroke="#222" stroke-width="1"/><path d="M8 7.5H13M8 10H13M8 12.5H13M8 15H13" stroke="#2f5fa0" stroke-width="1.4"/></svg>
<div class="a" style="left:337px;top:169px;width:808px;height:17px;background:#fff;"></div>
<svg class="a" style="left:337px;top:169px" width="808" height="17" viewBox="0 0 808 17"><path d="M1.5 1V5" stroke="#000" stroke-width="1"/><path d="M16.5 1V5" stroke="#000" stroke-width="1"/><path d="M31.5 1V17" stroke="#000" stroke-width="1"/><path d="M46.5 1V5" stroke="#000" stroke-width="1"/><path d="M61.5 1V5" stroke="#000" stroke-width="1"/><path d="M76.5 1V5" stroke="#000" stroke-width="1"/><path d="M91.5 1V9" stroke="#000" stroke-width="1"/><path d="M106.5 1V5" stroke="#000" stroke-width="1"/><path d="M121.5 1V5" stroke="#000" stroke-width="1"/><path d="M136.5 1V5" stroke="#000" stroke-width="1"/><path d="M151.5 1V17" stroke="#000" stroke-width="1"/><path d="M166.5 1V5" stroke="#000" stroke-width="1"/><path d="M181.5 1V5" stroke="#000" stroke-width="1"/><path d="M196.5 1V5" stroke="#000" stroke-width="1"/><path d="M211.5 1V9" stroke="#000" stroke-width="1"/><path d="M226.5 1V5" stroke="#000" stroke-width="1"/><path d="M241.5 1V5" stroke="#000" stroke-width="1"/><path d="M256.5 1V5" stroke="#000" stroke-width="1"/><path d="M271.5 1V17" stroke="#000" stroke-width="1"/><path d="M286.5 1V5" stroke="#000" stroke-width="1"/><path d="M301.5 1V5" stroke="#000" stroke-width="1"/><path d="M316.5 1V5" stroke="#000" stroke-width="1"/><path d="M331.5 1V9" stroke="#000" stroke-width="1"/><path d="M346.5 1V5" stroke="#000" stroke-width="1"/><path d="M361.5 1V5" stroke="#000" stroke-width="1"/><path d="M376.5 1V5" stroke="#000" stroke-width="1"/><path d="M391.5 1V17" stroke="#000" stroke-width="1"/><path d="M406.5 1V5" stroke="#000" stroke-width="1"/><path d="M421.5 1V5" stroke="#000" stroke-width="1"/><path d="M436.5 1V5" stroke="#000" stroke-width="1"/><path d="M451.5 1V9" stroke="#000" stroke-width="1"/><path d="M466.5 1V5" stroke="#000" stroke-width="1"/><path d="M481.5 1V5" stroke="#000" stroke-width="1"/><path d="M496.5 1V5" stroke="#000" stroke-width="1"/><path d="M511.5 1V17" stroke="#000" stroke-width="1"/><path d="M526.5 1V5" stroke="#000" stroke-width="1"/><path d="M541.5 1V5" stroke="#000" stroke-width="1"/><path d="M556.5 1V5" stroke="#000" stroke-width="1"/><path d="M571.5 1V9" stroke="#000" stroke-width="1"/><path d="M586.5 1V5" stroke="#000" stroke-width="1"/><path d="M601.5 1V5" stroke="#000" stroke-width="1"/><path d="M616.5 1V5" stroke="#000" stroke-width="1"/><path d="M631.5 1V17" stroke="#000" stroke-width="1"/><path d="M646.5 1V5" stroke="#000" stroke-width="1"/><path d="M661.5 1V5" stroke="#000" stroke-width="1"/><path d="M676.5 1V5" stroke="#000" stroke-width="1"/><path d="M691.5 1V9" stroke="#000" stroke-width="1"/><path d="M706.5 1V5" stroke="#000" stroke-width="1"/><path d="M721.5 1V5" stroke="#000" stroke-width="1"/><path d="M736.5 1V5" stroke="#000" stroke-width="1"/><path d="M751.5 1V17" stroke="#000" stroke-width="1"/><path d="M766.5 1V5" stroke="#000" stroke-width="1"/><path d="M781.5 1V5" stroke="#000" stroke-width="1"/><path d="M796.5 1V5" stroke="#000" stroke-width="1"/></svg>
<div class="t" style="left:370.5px;top:175.19px;font-size:11px;font-weight:400;color:#000;">0</div>
<div class="t" style="left:490.5px;top:175.19px;font-size:11px;font-weight:400;color:#000;">1</div>
<div class="t" style="left:610.5px;top:175.19px;font-size:11px;font-weight:400;color:#000;">2</div>
<div class="t" style="left:730.5px;top:175.19px;font-size:11px;font-weight:400;color:#000;">3</div>
<div class="t" style="left:850.5px;top:175.19px;font-size:11px;font-weight:400;color:#000;">4</div>
<div class="t" style="left:970.5px;top:175.19px;font-size:11px;font-weight:400;color:#000;">5</div>
<div class="t" style="left:1090.5px;top:175.19px;font-size:11px;font-weight:400;color:#000;">6</div>
<div class="a" style="left:338px;top:193px;width:807px;height:418px;background:#fff;"></div>
<div class="a" style="left:313px;top:193px;width:19px;height:147px;background:#fff;"></div>
<svg class="a" style="left:313px;top:193px" width="19" height="147" viewBox="0 0 19 147"><path d="M2 0.5H6" stroke="#000"/><path d="M2 15.5H6" stroke="#000"/><path d="M2 30.5H19" stroke="#000"/><path d="M2 45.5H6" stroke="#000"/><path d="M2 60.5H6" stroke="#000"/><path d="M2 75.5H6" stroke="#000"/><path d="M2 90.5H10" stroke="#000"/><path d="M2 105.5H6" stroke="#000"/><path d="M2 120.5H6" stroke="#000"/><path d="M2 135.5H6" stroke="#000"/></svg>
<div class="t" style="left:325px;top:225.19px;font-size:11px;font-weight:400;color:#000;">0</div>
<div class="a" style="left:313px;top:360px;width:19px;height:62px;background:#fff;"></div>
<svg class="a" style="left:313px;top:360px" width="19" height="62" viewBox="0 0 19 62"><path d="M2 15.5H6" stroke="#000"/><path d="M2 30.5H6" stroke="#000"/><path d="M2 45.5H6" stroke="#000"/><path d="M2 60.5H10" stroke="#000"/></svg>
<div class="t" style="left:325px;top:362.19px;font-size:11px;font-weight:400;color:#000;">0</div>
<div class="a" style="left:313px;top:442px;width:19px;height:56px;background:#fff;"></div>
<svg class="a" style="left:313px;top:442px" width="19" height="56" viewBox="0 0 19 56"><path d="M2 15.5H6" stroke="#000"/><path d="M2 30.5H6" stroke="#000"/><path d="M2 45.5H6" stroke="#000"/></svg>
<div class="t" style="left:325px;top:444.19px;font-size:11px;font-weight:400;color:#000;">0</div>
<div class="a" style="left:313px;top:518px;width:19px;height:43px;background:#fff;"></div>
<svg class="a" style="left:313px;top:518px" width="19" height="43" viewBox="0 0 19 43"><path d="M2 15.5H6" stroke="#000"/><path d="M2 30.5H6" stroke="#000"/></svg>
<div class="t" style="left:325px;top:520.19px;font-size:11px;font-weight:400;color:#000;">0</div>
<div class="a" style="left:313px;top:340px;width:832px;height:20px;background:#f0f0f0;"></div>
<svg class="a" style="left:347px;top:345px" width="9" height="6" viewBox="0 0 9 6"><path d="M0.5 5L4.5 1L8.5 5" stroke="#222" stroke-width="1.3" fill="none"/></svg>
<div class="t" style="left:364px;top:343.07px;font-size:13.5px;font-weight:400;color:#111;">Title</div>
<div class="a" style="left:313px;top:422px;width:832px;height:20px;background:#f0f0f0;"></div>
<svg class="a" style="left:347px;top:427px" width="9" height="6" viewBox="0 0 9 6"><path d="M0.5 5L4.5 1L8.5 5" stroke="#222" stroke-width="1.3" fill="none"/></svg>
<div class="t" style="left:364px;top:425.07px;font-size:13.5px;font-weight:400;color:#111;">Header</div>
<div class="a" style="left:313px;top:498px;width:832px;height:20px;background:#f0f0f0;"></div>
<svg class="a" style="left:347px;top:503px" width="9" height="6" viewBox="0 0 9 6"><path d="M0.5 5L4.5 1L8.5 5" stroke="#222" stroke-width="1.3" fill="none"/></svg>
<div class="t" style="left:364px;top:501.07px;font-size:13.5px;font-weight:400;color:#111;">Detail</div>
<div class="a" style="left:313px;top:561px;width:832px;height:20px;background:#f0f0f0;"></div>
<svg class="a" style="left:347px;top:566px" width="9" height="6" viewBox="0 0 9 6"><path d="M0.5 5L4.5 1L8.5 5" stroke="#222" stroke-width="1.3" fill="none"/></svg>
<div class="t" style="left:364px;top:564.07px;font-size:13.5px;font-weight:400;color:#111;">Footer</div>
<div class="a" style="left:370px;top:224px;width:775px;height:116px;background-image:radial-gradient(circle at 0.5px 0.5px,#8a8a8a 0.6px,transparent 0.7px);background-size:8px 8px;background-position:6px 0px"></div>
<div class="a" style="left:368px;top:223px;width:1px;height:117px;background:#2e6fb5;"></div>
<div class="a" style="left:369px;top:223px;width:1px;height:117px;background:#9cc0e6;"></div>
<div class="a" style="left:370px;top:361px;width:775px;height:61px;background-image:radial-gradient(circle at 0.5px 0.5px,#8a8a8a 0.6px,transparent 0.7px);background-size:8px 8px;background-position:6px 0px"></div>
<div class="a" style="left:368px;top:360px;width:1px;height:62px;background:#2e6fb5;"></div>
<div class="a" style="left:369px;top:360px;width:1px;height:62px;background:#9cc0e6;"></div>
<div class="a" style="left:370px;top:443px;width:775px;height:55px;background-image:radial-gradient(circle at 0.5px 0.5px,#8a8a8a 0.6px,transparent 0.7px);background-size:8px 8px;background-position:6px 0px"></div>
<div class="a" style="left:368px;top:442px;width:1px;height:56px;background:#2e6fb5;"></div>
<div class="a" style="left:369px;top:442px;width:1px;height:56px;background:#9cc0e6;"></div>
<div class="a" style="left:370px;top:519px;width:775px;height:42px;background-image:radial-gradient(circle at 0.5px 0.5px,#8a8a8a 0.6px,transparent 0.7px);background-size:8px 8px;background-position:6px 0px"></div>
<div class="a" style="left:368px;top:518px;width:1px;height:43px;background:#2e6fb5;"></div>
<div class="a" style="left:369px;top:518px;width:1px;height:43px;background:#9cc0e6;"></div>
<div class="a" style="left:368px;top:223px;width:777px;height:1px;background:#2e6fb5;"></div>
<div class="a" style="left:369px;top:224px;width:776px;height:1px;background:#b8d4ee;"></div>
<div class="a" style="left:338px;top:611px;width:807px;height:238px;background:#a0a0a0;"></div>
<div class="a" style="left:338px;top:849px;width:807px;height:1px;background:#fff;"></div>
<div class="a" style="left:359px;top:857px;width:540px;height:6px;background:#858585;"></div>
<div class="a" style="left:396px;top:238px;width:83px;height:37px;border:1px dashed #6a6a6a"></div>
<div class="t" style="left:397px;top:246.64px;font-size:25px;font-weight:700;color:#000;">Events</div>
<div class="a" style="left:396px;top:285px;width:760px;height:40px;border:1px dashed #6a6a6a;border-right:none"></div>
<div class="t" style="left:396px;top:286.03px;font-size:16.5px;font-weight:400;color:#111;">Filter: [Employee is (exactly) ANGELENA]; Equip. Filter = [Company is (exactly) abc company]</div>
<div class="t" style="left:396.5px;top:306.03px;font-size:16.5px;font-weight:400;color:#111;">Sort: Company, I.D., Event #</div>
<div class="a" style="left:338px;top:360px;width:807px;height:62px;overflow:hidden">
<div class="a" style="left:35px;top:39px;width:83px;height:30px;border:1px dashed #6a6a6a"></div>
<div class="t" style="left:34.5px;top:41.99px;font-size:19.5px;color:#111">Company</div>
<div class="a" style="left:192px;top:39px;width:32px;height:30px;border:1px dashed #6a6a6a"></div>
<div class="t" style="left:191.5px;top:41.99px;font-size:19.5px;color:#111">I.D.</div>
<div class="a" style="left:261px;top:39px;width:97px;height:30px;border:1px dashed #6a6a6a"></div>
<div class="t" style="left:260.5px;top:41.99px;font-size:19.5px;color:#111">Event Date</div>
<div class="a" style="left:390px;top:39px;width:99px;height:30px;border:1px dashed #6a6a6a"></div>
<div class="t" style="left:389.5px;top:41.99px;font-size:19.5px;color:#111">Event Type</div>
<div class="a" style="left:534px;top:39px;width:122px;height:30px;border:1px dashed #6a6a6a"></div>
<div class="t" style="left:533.5px;top:41.99px;font-size:19.5px;color:#111">Performed By</div>
<div class="a" style="left:686px;top:43px;width:113px;height:30px;border:1px dashed #6a6a6a"></div>
<div class="t" style="left:685.5px;top:45.29px;font-size:19.5px;color:#111">Event Result</div>
</div>
<div class="a" style="left:373px;top:444px;width:117px;height:23px;border:1px dashed #6a6a6a"></div>
<div class="t" style="left:372.5px;top:446.29px;font-size:19.5px;font-weight:400;color:#111;">abc company</div>
<div class="a" style="left:530px;top:444px;width:22px;height:23px;border:1px dashed #6a6a6a"></div>
<div class="t" style="left:529.5px;top:446.29px;font-size:19.5px;font-weight:400;color:#111;">02</div>
<div class="a" style="left:599px;top:444px;width:100px;height:23px;border:1px dashed #6a6a6a"></div>
<div class="t" style="left:598.5px;top:446.29px;font-size:19.5px;font-weight:400;color:#111;">10/24/2022</div>
<div class="a" style="left:728px;top:443px;width:130px;height:24px;border:1px dashed #6a6a6a"></div>
<div class="t" style="left:727.5px;top:447.49px;font-size:19.5px;font-weight:400;color:#111;">CALIBRATION</div>
<div class="a" style="left:872px;top:447px;width:105px;height:23px;border:1px dashed #6a6a6a"></div>
<div class="t" style="left:871.5px;top:449.69px;font-size:19.5px;font-weight:400;color:#111;">ANGELENA</div>
<div class="a" style="left:1024px;top:448px;width:114px;height:22px;border:1px dashed #6a6a6a"></div>
<div class="t" style="left:1023.5px;top:450.69px;font-size:19.5px;font-weight:400;color:#111;">PASS</div>
<div class="a" style="left:384px;top:532px;width:162px;height:19px;border:1px dashed #6a6a6a"></div>
<div class="t" style="left:383px;top:533.95px;font-size:16.6px;font-weight:400;color:#111;">3/13/2023 5:22:45 PM</div>
<div class="a" style="left:1147px;top:165px;width:221px;height:28px;background:#f0f0f0;"></div>
<div class="a" style="left:1147px;top:164px;width:222px;height:1px;background:#fafafa;"></div>
<div class="t" style="left:1151px;top:171.97px;font-size:14.8px;font-weight:400;color:#111;">Data Tree</div>
<svg class="a" style="left:1350px;top:176px" width="8" height="7" viewBox="0 0 8 7"><path d="M0.5 0.5L7.5 6.5M7.5 0.5L0.5 6.5" stroke="#111" stroke-width="1.7"/></svg>
<div class="a" style="left:1147px;top:193px;width:221px;height:188px;background:#fff;"></div>
<div class="a" style="left:1161px;top:205px;width:12px;height:1px;background:transparent;background-image:linear-gradient(90deg,#808080 50%,transparent 50%);background-size:2px 1px"></div>
<div class="a" style="left:1173px;top:195px;width:73px;height:20px;background:#d9d9d9;"></div>
<svg class="a" style="left:1177px;top:197px" width="16" height="16" viewBox="0 0 16 16"><rect x="0.5" y="0.5" width="15" height="15" rx="1" fill="#eef2fb" stroke="#5a6fa8"/><rect x="0.5" y="0.5" width="15" height="3" fill="#7a8fc8"/><path d="M1 7.5H15M1 11H15M5.5 4V15M10.5 4V15" stroke="#8ea2d8" stroke-width="1"/></svg>
<div class="t" style="left:1201px;top:198.15px;font-size:14px;font-weight:400;color:#111;">Events</div>
<div class="a" style="left:1148px;top:381px;width:220px;height:21px;background:#f0f0f0;"></div>
<div class="t" style="left:1152px;top:385.17px;font-size:13.5px;font-weight:400;color:#111;">Fields for Events</div>
<div class="a" style="left:1148px;top:402px;width:199px;height:418px;background:#fff;"></div>
<div class="a" style="left:1309px;top:402px;width:1px;height:22px;background:#e0e0e0;"></div>
<div class="a" style="left:1347px;top:402px;width:21px;height:418px;background:#f0f0f0;"></div>
<div class="a" style="left:1354px;top:437px;width:6px;height:85px;background:#858585;"></div>
<div class="t" style="left:1154.5px;top:407.57px;font-size:13.5px;font-weight:400;color:#111;">Name</div>
<div class="t" style="left:1316px;top:407.57px;font-size:13.5px;font-weight:400;color:#111;">Type</div>
<div class="a" style="left:1148px;top:426px;width:199px;height:391px;overflow:hidden">
<svg class="a" style="left:4px;top:0px" width="21" height="20"><rect x="0.7" y="0.7" width="16.6" height="15" fill="#f2f5fc" stroke="#4a64a8" stroke-width="1.4"/><rect x="1" y="1" width="16" height="2.6" fill="#6f8fd0"/><path d="M3 6.5H6M3 9H6M3 11.5H6M3 14H6" stroke="#7a8ab0" stroke-width="1"/><rect x="8.5" y="6.5" width="11" height="11.5" rx="1.5" fill="#5d86d0" stroke="#4a64a8" stroke-width="1.2"/><rect x="9.8" y="7.8" width="8.4" height="8.9" fill="none" stroke="#e8f0ff" stroke-width="1"/><path d="M11.5 10.5L14 13.5L16.5 10.5" stroke="#dfe8fa" stroke-width="1.3" fill="none"/></svg>
<div class="t" style="left:26px;top:4.37px;font-size:13.5px;color:#111">Event Date</div>
<div class="t" style="left:168px;top:4.37px;font-size:13.5px;color:#111;width:31px;overflow:hidden;padding-bottom:4px">DateTime</div>
<svg class="a" style="left:4px;top:21px" width="21" height="20"><rect x="0.7" y="0.7" width="16.6" height="15" fill="#f2f5fc" stroke="#4a64a8" stroke-width="1.4"/><rect x="1" y="1" width="16" height="2.6" fill="#6f8fd0"/><path d="M3 6.5H6M3 9H6M3 11.5H6M3 14H6" stroke="#7a8ab0" stroke-width="1"/><rect x="8.5" y="6.5" width="11" height="11.5" rx="1.5" fill="#5d86d0" stroke="#4a64a8" stroke-width="1.2"/><rect x="9.8" y="7.8" width="8.4" height="8.9" fill="none" stroke="#e8f0ff" stroke-width="1"/><path d="M11.5 10.5L14 13.5L16.5 10.5" stroke="#dfe8fa" stroke-width="1.3" fill="none"/></svg>
<div class="t" style="left:26px;top:25.37px;font-size:13.5px;color:#111">Event Time</div>
<div class="t" style="left:168px;top:25.37px;font-size:13.5px;color:#111;width:31px;overflow:hidden;padding-bottom:4px">DateTime</div>
<svg class="a" style="left:4px;top:42px" width="21" height="20"><rect x="0.7" y="0.7" width="16.6" height="15" fill="#f2f5fc" stroke="#4a64a8" stroke-width="1.4"/><rect x="1" y="1" width="16" height="2.6" fill="#6f8fd0"/><path d="M3 6.5H6M3 9H6M3 11.5H6M3 14H6" stroke="#7a8ab0" stroke-width="1"/><rect x="8.5" y="6.5" width="11" height="11.5" rx="1.5" fill="#5d86d0" stroke="#4a64a8" stroke-width="1.2"/><rect x="9.8" y="7.8" width="8.4" height="8.9" fill="none" stroke="#e8f0ff" stroke-width="1"/><path d="M11.5 10.5L14 13.5L16.5 10.5" stroke="#dfe8fa" stroke-width="1.3" fill="none"/></svg>
<div class="t" style="left:26px;top:46.37px;font-size:13.5px;color:#111">Event Type</div>
<div class="t" style="left:168px;top:46.37px;font-size:13.5px;color:#111;width:31px;overflow:hidden;padding-bottom:4px">String</div>
<svg class="a" style="left:4px;top:63px" width="21" height="20"><rect x="0.7" y="0.7" width="16.6" height="15" fill="#f2f5fc" stroke="#4a64a8" stroke-width="1.4"/><rect x="1" y="1" width="16" height="2.6" fill="#6f8fd0"/><path d="M3 6.5H6M3 9H6M3 11.5H6M3 14H6" stroke="#7a8ab0" stroke-width="1"/><rect x="8.5" y="6.5" width="11" height="11.5" rx="1.5" fill="#5d86d0" stroke="#4a64a8" stroke-width="1.2"/><rect x="9.8" y="7.8" width="8.4" height="8.9" fill="none" stroke="#e8f0ff" stroke-width="1"/><path d="M11.5 10.5L14 13.5L16.5 10.5" stroke="#dfe8fa" stroke-width="1.3" fill="none"/></svg>
<div class="t" style="left:26px;top:67.37px;font-size:13.5px;color:#111">Vendor Contact</div>
<div class="t" style="left:168px;top:67.37px;font-size:13.5px;color:#111;width:31px;overflow:hidden;padding-bottom:4px">String</div>
<svg class="a" style="left:4px;top:84px" width="21" height="20"><rect x="0.7" y="0.7" width="16.6" height="15" fill="#f2f5fc" stroke="#4a64a8" stroke-width="1.4"/><rect x="1" y="1" width="16" height="2.6" fill="#6f8fd0"/><path d="M3 6.5H6M3 9H6M3 11.5H6M3 14H6" stroke="#7a8ab0" stroke-width="1"/><rect x="8.5" y="6.5" width="11" height="11.5" rx="1.5" fill="#5d86d0" stroke="#4a64a8" stroke-width="1.2"/><rect x="9.8" y="7.8" width="8.4" height="8.9" fill="none" stroke="#e8f0ff" stroke-width="1"/><path d="M11.5 10.5L14 13.5L16.5 10.5" stroke="#dfe8fa" stroke-width="1.3" fill="none"/></svg>
<div class="t" style="left:26px;top:88.37px;font-size:13.5px;color:#111">Entered By</div>
<div class="t" style="left:168px;top:88.37px;font-size:13.5px;color:#111;width:31px;overflow:hidden;padding-bottom:4px">String</div>
<svg class="a" style="left:4px;top:105px" width="21" height="20"><rect x="0.7" y="0.7" width="16.6" height="15" fill="#f2f5fc" stroke="#4a64a8" stroke-width="1.4"/><rect x="1" y="1" width="16" height="2.6" fill="#6f8fd0"/><path d="M3 6.5H6M3 9H6M3 11.5H6M3 14H6" stroke="#7a8ab0" stroke-width="1"/><rect x="8.5" y="6.5" width="11" height="11.5" rx="1.5" fill="#5d86d0" stroke="#4a64a8" stroke-width="1.2"/><rect x="9.8" y="7.8" width="8.4" height="8.9" fill="none" stroke="#e8f0ff" stroke-width="1"/><path d="M11.5 10.5L14 13.5L16.5 10.5" stroke="#dfe8fa" stroke-width="1.3" fill="none"/></svg>
<div class="t" style="left:26px;top:109.37px;font-size:13.5px;color:#111">Performed By</div>
<div class="t" style="left:168px;top:109.37px;font-size:13.5px;color:#111;width:31px;overflow:hidden;padding-bottom:4px">String</div>
<svg class="a" style="left:4px;top:126px" width="21" height="20"><rect x="0.7" y="0.7" width="16.6" height="15" fill="#f2f5fc" stroke="#4a64a8" stroke-width="1.4"/><rect x="1" y="1" width="16" height="2.6" fill="#6f8fd0"/><path d="M3 6.5H6M3 9H6M3 11.5H6M3 14H6" stroke="#7a8ab0" stroke-width="1"/><rect x="8.5" y="6.5" width="11" height="11.5" rx="1.5" fill="#5d86d0" stroke="#4a64a8" stroke-width="1.2"/><rect x="9.8" y="7.8" width="8.4" height="8.9" fill="none" stroke="#e8f0ff" stroke-width="1"/><path d="M11.5 10.5L14 13.5L16.5 10.5" stroke="#dfe8fa" stroke-width="1.3" fill="none"/></svg>
<div class="t" style="left:26px;top:130.37px;font-size:13.5px;color:#111">Event Cost</div>
<div class="t" style="left:168px;top:130.37px;font-size:13.5px;color:#111;width:31px;overflow:hidden;padding-bottom:4px">Double</div>
<svg class="a" style="left:4px;top:147px" width="21" height="20"><rect x="0.7" y="0.7" width="16.6" height="15" fill="#f2f5fc" stroke="#4a64a8" stroke-width="1.4"/><rect x="1" y="1" width="16" height="2.6" fill="#6f8fd0"/><path d="M3 6.5H6M3 9H6M3 11.5H6M3 14H6" stroke="#7a8ab0" stroke-width="1"/><rect x="8.5" y="6.5" width="11" height="11.5" rx="1.5" fill="#5d86d0" stroke="#4a64a8" stroke-width="1.2"/><rect x="9.8" y="7.8" width="8.4" height="8.9" fill="none" stroke="#e8f0ff" stroke-width="1"/><path d="M11.5 10.5L14 13.5L16.5 10.5" stroke="#dfe8fa" stroke-width="1.3" fill="none"/></svg>
<div class="t" style="left:26px;top:151.37px;font-size:13.5px;color:#111">Condition</div>
<div class="t" style="left:168px;top:151.37px;font-size:13.5px;color:#111;width:31px;overflow:hidden;padding-bottom:4px">String</div>
<svg class="a" style="left:4px;top:168px" width="21" height="20"><rect x="0.7" y="0.7" width="16.6" height="15" fill="#f2f5fc" stroke="#4a64a8" stroke-width="1.4"/><rect x="1" y="1" width="16" height="2.6" fill="#6f8fd0"/><path d="M3 6.5H6M3 9H6M3 11.5H6M3 14H6" stroke="#7a8ab0" stroke-width="1"/><rect x="8.5" y="6.5" width="11" height="11.5" rx="1.5" fill="#5d86d0" stroke="#4a64a8" stroke-width="1.2"/><rect x="9.8" y="7.8" width="8.4" height="8.9" fill="none" stroke="#e8f0ff" stroke-width="1"/><path d="M11.5 10.5L14 13.5L16.5 10.5" stroke="#dfe8fa" stroke-width="1.3" fill="none"/></svg>
<div class="t" style="left:26px;top:172.37px;font-size:13.5px;color:#111">Rresult1</div>
<div class="t" style="left:168px;top:172.37px;font-size:13.5px;color:#111;width:31px;overflow:hidden;padding-bottom:4px">Double</div>
<svg class="a" style="left:4px;top:189px" width="21" height="20"><rect x="0.7" y="0.7" width="16.6" height="15" fill="#f2f5fc" stroke="#4a64a8" stroke-width="1.4"/><rect x="1" y="1" width="16" height="2.6" fill="#6f8fd0"/><path d="M3 6.5H6M3 9H6M3 11.5H6M3 14H6" stroke="#7a8ab0" stroke-width="1"/><rect x="8.5" y="6.5" width="11" height="11.5" rx="1.5" fill="#5d86d0" stroke="#4a64a8" stroke-width="1.2"/><rect x="9.8" y="7.8" width="8.4" height="8.9" fill="none" stroke="#e8f0ff" stroke-width="1"/><path d="M11.5 10.5L14 13.5L16.5 10.5" stroke="#dfe8fa" stroke-width="1.3" fill="none"/></svg>
<div class="t" style="left:26px;top:193.37px;font-size:13.5px;color:#111">Rresult2</div>
<div class="t" style="left:168px;top:193.37px;font-size:13.5px;color:#111;width:31px;overflow:hidden;padding-bottom:4px">Double</div>
<svg class="a" style="left:4px;top:210px" width="21" height="20"><rect x="0.7" y="0.7" width="16.6" height="15" fill="#f2f5fc" stroke="#4a64a8" stroke-width="1.4"/><rect x="1" y="1" width="16" height="2.6" fill="#6f8fd0"/><path d="M3 6.5H6M3 9H6M3 11.5H6M3 14H6" stroke="#7a8ab0" stroke-width="1"/><rect x="8.5" y="6.5" width="11" height="11.5" rx="1.5" fill="#5d86d0" stroke="#4a64a8" stroke-width="1.2"/><rect x="9.8" y="7.8" width="8.4" height="8.9" fill="none" stroke="#e8f0ff" stroke-width="1"/><path d="M11.5 10.5L14 13.5L16.5 10.5" stroke="#dfe8fa" stroke-width="1.3" fill="none"/></svg>
<div class="t" style="left:26px;top:214.37px;font-size:13.5px;color:#111">Rresult3</div>
<div class="t" style="left:168px;top:214.37px;font-size:13.5px;color:#111;width:31px;overflow:hidden;padding-bottom:4px">Double</div>
<svg class="a" style="left:4px;top:231px" width="21" height="20"><rect x="0.7" y="0.7" width="16.6" height="15" fill="#f2f5fc" stroke="#4a64a8" stroke-width="1.4"/><rect x="1" y="1" width="16" height="2.6" fill="#6f8fd0"/><path d="M3 6.5H6M3 9H6M3 11.5H6M3 14H6" stroke="#7a8ab0" stroke-width="1"/><rect x="8.5" y="6.5" width="11" height="11.5" rx="1.5" fill="#5d86d0" stroke="#4a64a8" stroke-width="1.2"/><rect x="9.8" y="7.8" width="8.4" height="8.9" fill="none" stroke="#e8f0ff" stroke-width="1"/><path d="M11.5 10.5L14 13.5L16.5 10.5" stroke="#dfe8fa" stroke-width="1.3" fill="none"/></svg>
<div class="t" style="left:26px;top:235.37px;font-size:13.5px;color:#111">Rresult4</div>
<div class="t" style="left:168px;top:235.37px;font-size:13.5px;color:#111;width:31px;overflow:hidden;padding-bottom:4px">Double</div>
<svg class="a" style="left:4px;top:252px" width="21" height="20"><rect x="0.7" y="0.7" width="16.6" height="15" fill="#f2f5fc" stroke="#4a64a8" stroke-width="1.4"/><rect x="1" y="1" width="16" height="2.6" fill="#6f8fd0"/><path d="M3 6.5H6M3 9H6M3 11.5H6M3 14H6" stroke="#7a8ab0" stroke-width="1"/><rect x="8.5" y="6.5" width="11" height="11.5" rx="1.5" fill="#5d86d0" stroke="#4a64a8" stroke-width="1.2"/><rect x="9.8" y="7.8" width="8.4" height="8.9" fill="none" stroke="#e8f0ff" stroke-width="1"/><path d="M11.5 10.5L14 13.5L16.5 10.5" stroke="#dfe8fa" stroke-width="1.3" fill="none"/></svg>
<div class="t" style="left:26px;top:256.37px;font-size:13.5px;color:#111">Rresult5</div>
<div class="t" style="left:168px;top:256.37px;font-size:13.5px;color:#111;width:31px;overflow:hidden;padding-bottom:4px">Double</div>
<div class="a" style="left:4px;top:273px;width:156px;height:20px;background:#d9d9d9"></div>
<svg class="a" style="left:4px;top:273px" width="21" height="20"><rect x="0.7" y="0.7" width="16.6" height="15" fill="#f2f5fc" stroke="#4a64a8" stroke-width="1.4"/><rect x="1" y="1" width="16" height="2.6" fill="#6f8fd0"/><path d="M3 6.5H6M3 9H6M3 11.5H6M3 14H6" stroke="#7a8ab0" stroke-width="1"/><rect x="8.5" y="6.5" width="11" height="11.5" rx="1.5" fill="#5d86d0" stroke="#4a64a8" stroke-width="1.2"/><rect x="9.8" y="7.8" width="8.4" height="8.9" fill="none" stroke="#e8f0ff" stroke-width="1"/><path d="M11.5 10.5L14 13.5L16.5 10.5" stroke="#dfe8fa" stroke-width="1.3" fill="none"/></svg>
<div class="t" style="left:26px;top:277.37px;font-size:13.5px;color:#111">Event Result</div>
<div class="t" style="left:168px;top:277.37px;font-size:13.5px;color:#111;width:31px;overflow:hidden;padding-bottom:4px">String</div>
<svg class="a" style="left:4px;top:294px" width="21" height="20"><rect x="0.7" y="0.7" width="16.6" height="15" fill="#f2f5fc" stroke="#4a64a8" stroke-width="1.4"/><rect x="1" y="1" width="16" height="2.6" fill="#6f8fd0"/><path d="M3 6.5H6M3 9H6M3 11.5H6M3 14H6" stroke="#7a8ab0" stroke-width="1"/><rect x="8.5" y="6.5" width="11" height="11.5" rx="1.5" fill="#5d86d0" stroke="#4a64a8" stroke-width="1.2"/><rect x="9.8" y="7.8" width="8.4" height="8.9" fill="none" stroke="#e8f0ff" stroke-width="1"/><path d="M11.5 10.5L14 13.5L16.5 10.5" stroke="#dfe8fa" stroke-width="1.3" fill="none"/></svg>
<div class="t" style="left:26px;top:298.37px;font-size:13.5px;color:#111">Vendor</div>
<div class="t" style="left:168px;top:298.37px;font-size:13.5px;color:#111;width:31px;overflow:hidden;padding-bottom:4px">String</div>
<svg class="a" style="left:4px;top:315px" width="21" height="20"><rect x="0.7" y="0.7" width="16.6" height="15" fill="#f2f5fc" stroke="#4a64a8" stroke-width="1.4"/><rect x="1" y="1" width="16" height="2.6" fill="#6f8fd0"/><path d="M3 6.5H6M3 9H6M3 11.5H6M3 14H6" stroke="#7a8ab0" stroke-width="1"/><rect x="8.5" y="6.5" width="11" height="11.5" rx="1.5" fill="#5d86d0" stroke="#4a64a8" stroke-width="1.2"/><rect x="9.8" y="7.8" width="8.4" height="8.9" fill="none" stroke="#e8f0ff" stroke-width="1"/><path d="M11.5 10.5L14 13.5L16.5 10.5" stroke="#dfe8fa" stroke-width="1.3" fill="none"/></svg>
<div class="t" style="left:26px;top:319.37px;font-size:13.5px;color:#111">Po Number</div>
<div class="t" style="left:168px;top:319.37px;font-size:13.5px;color:#111;width:31px;overflow:hidden;padding-bottom:4px">String</div>
<svg class="a" style="left:4px;top:336px" width="21" height="20"><rect x="0.7" y="0.7" width="16.6" height="15" fill="#f2f5fc" stroke="#4a64a8" stroke-width="1.4"/><rect x="1" y="1" width="16" height="2.6" fill="#6f8fd0"/><path d="M3 6.5H6M3 9H6M3 11.5H6M3 14H6" stroke="#7a8ab0" stroke-width="1"/><rect x="8.5" y="6.5" width="11" height="11.5" rx="1.5" fill="#5d86d0" stroke="#4a64a8" stroke-width="1.2"/><rect x="9.8" y="7.8" width="8.4" height="8.9" fill="none" stroke="#e8f0ff" stroke-width="1"/><path d="M11.5 10.5L14 13.5L16.5 10.5" stroke="#dfe8fa" stroke-width="1.3" fill="none"/></svg>
<div class="t" style="left:26px;top:340.37px;font-size:13.5px;color:#111">New Event</div>
<div class="t" style="left:168px;top:340.37px;font-size:13.5px;color:#111;width:31px;overflow:hidden;padding-bottom:4px">String</div>
<svg class="a" style="left:4px;top:357px" width="21" height="20"><rect x="0.7" y="0.7" width="16.6" height="15" fill="#f2f5fc" stroke="#4a64a8" stroke-width="1.4"/><rect x="1" y="1" width="16" height="2.6" fill="#6f8fd0"/><path d="M3 6.5H6M3 9H6M3 11.5H6M3 14H6" stroke="#7a8ab0" stroke-width="1"/><rect x="8.5" y="6.5" width="11" height="11.5" rx="1.5" fill="#5d86d0" stroke="#4a64a8" stroke-width="1.2"/><rect x="9.8" y="7.8" width="8.4" height="8.9" fill="none" stroke="#e8f0ff" stroke-width="1"/><path d="M11.5 10.5L14 13.5L16.5 10.5" stroke="#dfe8fa" stroke-width="1.3" fill="none"/></svg>
<div class="t" style="left:26px;top:361.37px;font-size:13.5px;color:#111">Temperature</div>
<div class="t" style="left:168px;top:361.37px;font-size:13.5px;color:#111;width:31px;overflow:hidden;padding-bottom:4px">Double</div>
<svg class="a" style="left:4px;top:378px" width="21" height="20"><rect x="0.7" y="0.7" width="16.6" height="15" fill="#f2f5fc" stroke="#4a64a8" stroke-width="1.4"/><rect x="1" y="1" width="16" height="2.6" fill="#6f8fd0"/><path d="M3 6.5H6M3 9H6M3 11.5H6M3 14H6" stroke="#7a8ab0" stroke-width="1"/><rect x="8.5" y="6.5" width="11" height="11.5" rx="1.5" fill="#5d86d0" stroke="#4a64a8" stroke-width="1.2"/><rect x="9.8" y="7.8" width="8.4" height="8.9" fill="none" stroke="#e8f0ff" stroke-width="1"/><path d="M11.5 10.5L14 13.5L16.5 10.5" stroke="#dfe8fa" stroke-width="1.3" fill="none"/></svg>
<div class="t" style="left:26px;top:382.37px;font-size:13.5px;color:#111">Temp. Type</div>
<div class="t" style="left:168px;top:382.37px;font-size:13.5px;color:#111;width:31px;overflow:hidden;padding-bottom:4px">String</div>
</div>
<div class="a" style="left:1148px;top:817px;width:199px;height:3px;background:#f0f0f0;"></div>
<div class="a" style="left:1148px;top:820px;width:220px;height:16px;background:#f0f0f0;"></div>
<div class="a" style="left:1169px;top:825px;width:105px;height:6px;background:#858585;"></div>
<div class="a" style="left:1148px;top:838px;width:219px;height:29px;background:#fff;border:1px solid #c8c8c8;border-top:1.5px solid #111"></div>
<div class="a" style="left:1156px;top:838px;width:44px;height:27px;background:#fff;border:1.5px solid #111;border-top:none"></div>
<div class="t" style="left:1162px;top:846.15px;font-size:14px;font-weight:400;color:#111;">Data</div>
<div class="t" style="left:1206px;top:846.15px;font-size:14px;font-weight:400;color:#111;">Layout</div>
<div class="a" style="left:1254px;top:843px;width:1px;height:20px;background:#999;"></div>
<div class="t" style="left:3px;top:881.15px;font-size:14px;font-weight:400;color:#111;">Ready.</div>
<div class="a" style="left:662px;top:875px;width:1px;height:26px;background:#a8a8a8;"></div>
<div class="a" style="left:774px;top:875px;width:1px;height:26px;background:#a8a8a8;"></div>
<div class="a" style="left:886px;top:875px;width:1px;height:26px;background:#a8a8a8;"></div>
<div class="a" style="left:999px;top:875px;width:1px;height:26px;background:#a8a8a8;"></div>
<div class="a" style="left:1110px;top:875px;width:1px;height:26px;background:#a8a8a8;"></div>
<div class="t" style="left:668px;top:880.95px;font-size:14px;font-weight:400;color:#111;">Left: 0</div>
<div class="t" style="left:780px;top:880.95px;font-size:14px;font-weight:400;color:#111;">Top: 0</div>
<div class="t" style="left:892px;top:880.95px;font-size:14px;font-weight:400;color:#111;">Width: 0</div>
<div class="t" style="left:1004px;top:880.95px;font-size:14px;font-weight:400;color:#111;">Height: 0</div>
<div class="t" style="left:1117px;top:880.95px;font-size:14px;font-weight:400;color:#111;">100%</div>
<div class="a" style="left:1171px;top:881px;width:176px;height:9px;background:#e7e7e7;border:1px solid #d6d6d6"></div>
<svg class="a" style="left:1189px;top:879px" width="9" height="12" viewBox="0 0 9 12"><path d="M0 3L4.5 0L9 3V12H0Z" fill="#0078d7"/></svg>
<svg class="a" style="left:1360px;top:887px" width="14" height="15" viewBox="0 0 14 15"><path d="M13.5 0.5L1 13.5" stroke="#9a9a9a" stroke-width="1.6"/><path d="M14 1L2 14H14Z" fill="#dcdcdc"/></svg>
<div class="a" style="left:0px;top:0px;width:1px;height:902px;background:#a0a0a0;"></div>
<div class="a" style="left:0px;top:3px;width:1px;height:21px;background:#333;"></div>
<div class="a" style="left:1373px;top:0px;width:1px;height:902px;background:#b4b4b4;"></div>
<div class="a" style="left:0px;top:900px;width:1374px;height:2px;background:#8a8a8a;"></div>
</body></html>
